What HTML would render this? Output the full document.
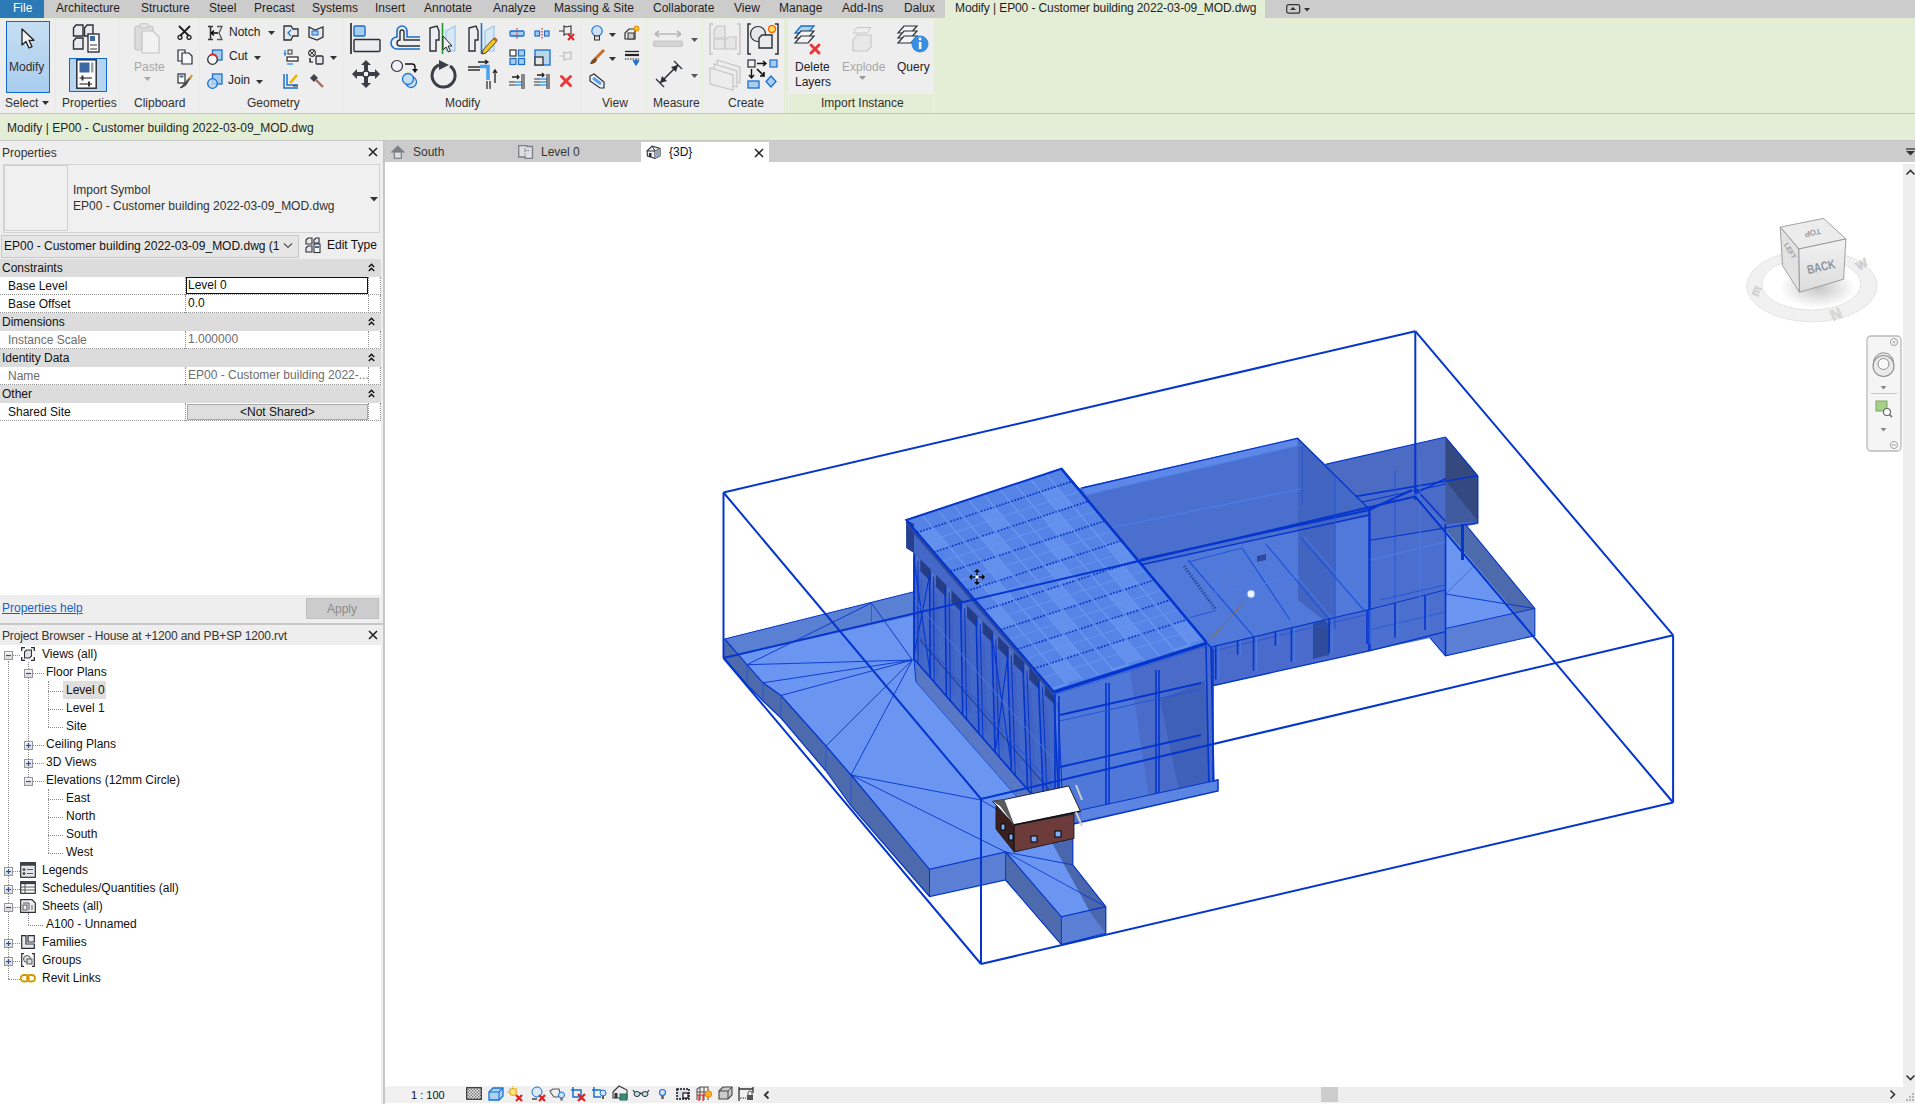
<!DOCTYPE html><html><head><meta charset="utf-8"><style>
html,body{margin:0;padding:0;width:1915px;height:1104px;overflow:hidden;background:#fff;font-family:"Liberation Sans",sans-serif;}
.t{position:absolute;white-space:nowrap;line-height:15px;}
svg{position:absolute;overflow:visible}
</style></head><body>
<div style="position:absolute;left:0px;top:0px;width:1915px;height:18px;background:#cccccc"></div>
<div style="position:absolute;left:0px;top:0px;width:44px;height:18px;background:#2b79b5"></div>
<div class="t" style="left:13px;top:1px;font-size:12px;color:#ffffff;">File</div>
<div class="t" style="left:56px;top:1px;font-size:12px;color:#1e1e1e;">Architecture</div>
<div class="t" style="left:141px;top:1px;font-size:12px;color:#1e1e1e;">Structure</div>
<div class="t" style="left:209px;top:1px;font-size:12px;color:#1e1e1e;">Steel</div>
<div class="t" style="left:254px;top:1px;font-size:12px;color:#1e1e1e;">Precast</div>
<div class="t" style="left:312px;top:1px;font-size:12px;color:#1e1e1e;">Systems</div>
<div class="t" style="left:375px;top:1px;font-size:12px;color:#1e1e1e;">Insert</div>
<div class="t" style="left:424px;top:1px;font-size:12px;color:#1e1e1e;">Annotate</div>
<div class="t" style="left:493px;top:1px;font-size:12px;color:#1e1e1e;">Analyze</div>
<div class="t" style="left:554px;top:1px;font-size:12px;color:#1e1e1e;">Massing &amp; Site</div>
<div class="t" style="left:653px;top:1px;font-size:12px;color:#1e1e1e;">Collaborate</div>
<div class="t" style="left:734px;top:1px;font-size:12px;color:#1e1e1e;">View</div>
<div class="t" style="left:779px;top:1px;font-size:12px;color:#1e1e1e;">Manage</div>
<div class="t" style="left:842px;top:1px;font-size:12px;color:#1e1e1e;">Add-Ins</div>
<div class="t" style="left:904px;top:1px;font-size:12px;color:#1e1e1e;">Dalux</div>
<div style="position:absolute;left:945px;top:0px;width:320px;height:18px;background:#e4eed6"></div>
<div class="t" style="left:955px;top:1px;font-size:12px;color:#1e1e1e;letter-spacing:-0.1px">Modify | EP00 - Customer building 2022-03-09_MOD.dwg</div>
<div style="position:absolute;left:0px;top:18px;width:1915px;height:95px;background:#e4eed6"></div>
<div style="position:absolute;left:0px;top:113px;width:1915px;height:1px;background:#c5c5c5"></div>
<div style="position:absolute;left:0px;top:19px;width:55px;height:94px;background:#eeeeee"></div>
<div style="position:absolute;left:56px;top:19px;width:63px;height:94px;background:#eeeeee"></div>
<div style="position:absolute;left:120px;top:19px;width:79px;height:94px;background:#eeeeee"></div>
<div style="position:absolute;left:200px;top:19px;width:143px;height:94px;background:#eeeeee"></div>
<div style="position:absolute;left:344px;top:19px;width:237px;height:94px;background:#eeeeee"></div>
<div style="position:absolute;left:582px;top:19px;width:64px;height:94px;background:#eeeeee"></div>
<div style="position:absolute;left:647px;top:19px;width:55px;height:94px;background:#eeeeee"></div>
<div style="position:absolute;left:703px;top:19px;width:81px;height:94px;background:#eeeeee"></div>
<div style="position:absolute;left:788px;top:19px;width:146px;height:94px;background:#eeeeee"></div>
<div style="position:absolute;left:789px;top:94px;width:144px;height:19px;background:#e4eed6"></div>
<div class="t" style="left:5px;top:96px;font-size:12px;color:#303030;">Select</div>
<div class="t" style="left:62px;top:96px;font-size:12px;color:#303030;">Properties</div>
<div class="t" style="left:134px;top:96px;font-size:12px;color:#303030;">Clipboard</div>
<div class="t" style="left:247px;top:96px;font-size:12px;color:#303030;">Geometry</div>
<div class="t" style="left:445px;top:96px;font-size:12px;color:#303030;">Modify</div>
<div class="t" style="left:602px;top:96px;font-size:12px;color:#303030;">View</div>
<div class="t" style="left:653px;top:96px;font-size:12px;color:#303030;">Measure</div>
<div class="t" style="left:728px;top:96px;font-size:12px;color:#303030;">Create</div>
<div class="t" style="left:821px;top:96px;font-size:12px;color:#303030;">Import Instance</div>
<div style="position:absolute;left:6px;top:21px;width:44px;height:72px;box-sizing:border-box;border:1.5px solid #0f66cc;background:linear-gradient(#c6def3,#a9cdee)"></div>
<svg style="left:20px;top:28px" width="16" height="22" viewBox="0 0 16 22"><path d="M2,1 L2,17 L6,13.5 L9,20 L12,18.6 L9,12.3 L14,12.3 Z" fill="#f4f4f4" stroke="#222" stroke-width="1.3" stroke-linejoin="round"/></svg>
<div class="t" style="left:9px;top:60px;font-size:12px;color:#303030">Modify</div>
<svg style="left:42px;top:101px" width="7" height="4" viewBox="0 0 7 4"><polygon points="0,0 7,0 3.5,4" fill="#303030"/></svg>
<svg style="left:72px;top:23px" width="32" height="31" viewBox="0 0 32 31"><g stroke="#2b2f36" stroke-width="1.4" fill="#e8eaee"><path d="M1.5,5 L4,2 L11,2 L11,13 L1.5,13 Z"/><path d="M12.5,5 L15,2 L21,2 L21,13 L12.5,13 Z"/><path d="M1.5,18 L4,15 L11,15 L11,26 L1.5,26 Z"/></g><rect x="16" y="11" width="11" height="18" fill="#fff" stroke="#2b2f36" stroke-width="1.4"/><rect x="18" y="13" width="5" height="5" fill="#3e6aa8"/><line x1="18" y1="22" x2="25" y2="22" stroke="#333"/><line x1="18" y1="26" x2="25" y2="26" stroke="#333"/></svg>
<div style="position:absolute;left:69px;top:58px;width:38px;height:34px;box-sizing:border-box;border:1.5px solid #0f66cc;background:#b7d5f0"></div>
<svg style="left:76px;top:59px" width="21" height="30" viewBox="0 0 21 30"><rect x="0.8" y="0.8" width="19.4" height="28.4" fill="#fff" stroke="#2b2f36" stroke-width="1.5"/><rect x="3.5" y="3.5" width="10" height="10" fill="#3d68a6"/><rect x="15" y="3.5" width="2.5" height="10" fill="#9aa3ad"/><line x1="3.5" y1="19" x2="16" y2="19" stroke="#333" stroke-width="1.2"/><rect x="5.5" y="16.5" width="2" height="5" fill="#333"/><line x1="3.5" y1="25" x2="16" y2="25" stroke="#333" stroke-width="1.2"/><rect x="12" y="22.5" width="2" height="5" fill="#333"/></svg>
<svg style="left:134px;top:23px" width="27" height="31" viewBox="0 0 27 31"><rect x="1" y="3" width="18" height="24" rx="2" fill="#dcdcdc" stroke="#c4c4c4" stroke-width="1.2"/><rect x="6" y="0.8" width="8" height="4" rx="1" fill="#e6e6e6" stroke="#c4c4c4"/><path d="M8,8 L19,8 L25,14 L25,30 L8,30 Z" fill="#f2f2f2" stroke="#c4c4c4" stroke-width="1.2"/></svg>
<div class="t" style="left:134px;top:60px;font-size:12px;color:#a8a8a8">Paste</div>
<svg style="left:144px;top:77px" width="7" height="4" viewBox="0 0 7 4"><polygon points="0,0 7,0 3.5,4" fill="#a8a8a8"/></svg>
<svg style="left:177px;top:25px" width="15" height="15" viewBox="0 0 15 15"><path d="M2,1 L12,11 M13,1 L3,11" stroke="#1f1f1f" stroke-width="1.8"/><circle cx="3" cy="12.3" r="2" fill="none" stroke="#1f1f1f" stroke-width="1.3"/><circle cx="12" cy="12.3" r="2" fill="none" stroke="#1f1f1f" stroke-width="1.3"/></svg>
<svg style="left:177px;top:49px" width="16" height="16" viewBox="0 0 16 16"><path d="M1,1 L8,1 L8,12 L1,12 Z" fill="#f5f5f5" stroke="#2b2f36" stroke-width="1.2"/><path d="M5,4 L12,4 L15,7 L15,15 L5,15 Z" fill="#f8f8f8" stroke="#2b2f36" stroke-width="1.2"/></svg>
<svg style="left:177px;top:73px" width="16" height="16" viewBox="0 0 16 16"><rect x="1" y="1" width="7" height="9" fill="#fff" stroke="#2b2f36" stroke-width="1.2"/><rect x="2.5" y="2.5" width="4" height="2" fill="#3d68a6"/><path d="M15,2 L6,12 L3,15 L6,14 L9,12 Z" fill="#555" stroke="#333" stroke-width="0.8"/><path d="M15,2 L13,6" stroke="#d49a3a" stroke-width="2"/></svg>
<svg style="left:207px;top:25px" width="16" height="16" viewBox="0 0 16 16"><path d="M1,1.5 L6,1.5 M3.5,1.5 L3.5,14.5 M1,14.5 L6,14.5" stroke="#333" stroke-width="1.6"/><path d="M10,1.5 L15,1.5 L12,8 L15,14.5 L10,14.5" fill="none" stroke="#555" stroke-width="1.3"/><path d="M4,8 L11,8 M4,8 L7,5.5 M4,8 L7,10.5" stroke="#000" stroke-width="1.3"/></svg>
<div class="t" style="left:229px;top:25px;font-size:12px;color:#222">Notch</div>
<svg style="left:268px;top:31px" width="7" height="4" viewBox="0 0 7 4"><polygon points="0,0 7,0 3.5,4" fill="#333"/></svg>
<svg style="left:207px;top:49px" width="16" height="16" viewBox="0 0 16 16"><rect x="5.5" y="1" width="9.5" height="10" fill="#a9cdee" stroke="#1a6fd0" stroke-width="1.3"/><circle cx="5.5" cy="10.5" r="4.8" fill="#fafafa" stroke="#2b2f36" stroke-width="1.3"/><path d="M3,6 A4.8,4.8 0 0 1 10,8" fill="none" stroke="#e02020" stroke-width="1.5"/></svg>
<div class="t" style="left:229px;top:49px;font-size:12px;color:#222">Cut</div>
<svg style="left:254px;top:56px" width="7" height="4" viewBox="0 0 7 4"><polygon points="0,0 7,0 3.5,4" fill="#333"/></svg>
<svg style="left:207px;top:73px" width="16" height="16" viewBox="0 0 16 16"><rect x="5.5" y="1" width="9.5" height="10" fill="#a9cdee" stroke="#1a6fd0" stroke-width="1.3"/><circle cx="5.5" cy="10.5" r="4.8" fill="#b9d6ee" fill-opacity="0.8" stroke="#1a6fd0" stroke-width="1.3"/></svg>
<div class="t" style="left:228px;top:73px;font-size:12px;color:#222">Join</div>
<svg style="left:256px;top:80px" width="7" height="4" viewBox="0 0 7 4"><polygon points="0,0 7,0 3.5,4" fill="#333"/></svg>
<svg style="left:283px;top:25px" width="16" height="16" viewBox="0 0 16 16"><path d="M1,1 L8,1 L10,4 L15,4 L15,11 L10,11 L8,15 L1,15 Z" fill="#e6e8ec" stroke="#2b2f36" stroke-width="1.3"/><path d="M8,5 L5,8 L8,11" fill="none" stroke="#1a6fd0" stroke-width="1.2"/></svg>
<svg style="left:308px;top:25px" width="16" height="16" viewBox="0 0 16 16"><path d="M1,2 L7,5 L15,2 L15,12 L9,15 L1,12 Z" fill="#e8eaee" stroke="#2b2f36" stroke-width="1.3"/><rect x="4" y="6" width="6" height="4" fill="#a9cdee" stroke="#1a6fd0"/></svg>
<svg style="left:283px;top:49px" width="16" height="16" viewBox="0 0 16 16"><path d="M2,1 L2,6 M1,4 L2,6 L3,4" stroke="#2a8ae8" stroke-width="1.3" fill="none"/><rect x="5" y="1" width="4" height="4" fill="none" stroke="#333"/><rect x="4" y="8" width="11" height="4" fill="#fff" stroke="#333" stroke-width="1.3"/><path d="M4,15 L10,15" stroke="#2a8ae8" stroke-width="1.3"/></svg>
<svg style="left:308px;top:49px" width="16" height="16" viewBox="0 0 16 16"><circle cx="4" cy="4" r="3.3" fill="none" stroke="#333" stroke-width="1.2"/><path d="M1.8,1.8 L6.2,6.2 M6.2,1.8 L1.8,6.2" stroke="#333"/><rect x="8" y="7" width="7" height="8" rx="1" fill="#e6e8ec" stroke="#2b2f36" stroke-width="1.3"/><path d="M2,9 L2,13 L5,13" stroke="#000" stroke-width="1.2" fill="none"/></svg>
<svg style="left:330px;top:56px" width="7" height="4" viewBox="0 0 7 4"><polygon points="0,0 7,0 3.5,4" fill="#333"/></svg>
<svg style="left:283px;top:73px" width="16" height="16" viewBox="0 0 16 16"><path d="M1,1 L1,15 L15,15 M4,1 L4,12 L15,12" stroke="#1a6fd0" stroke-width="1.5" fill="none"/><path d="M7,10 L14,2" stroke="#f0b400" stroke-width="2.5"/><path d="M10,13 L15,13" stroke="#333"/></svg>
<svg style="left:308px;top:73px" width="16" height="16" viewBox="0 0 16 16"><path d="M2,5 L6,1 L10,5 L6,9 Z" fill="#3f454e"/><path d="M8,7 L15,14" stroke="#a86a5a" stroke-width="2.4"/></svg>
<svg style="left:350px;top:23px" width="31" height="32" viewBox="0 0 31 32"><line x1="1" y1="0" x2="1" y2="31" stroke="#111" stroke-width="1.5"/><rect x="4" y="3" width="11" height="10" rx="1" fill="#a9cdee" stroke="#1a6fd0" stroke-width="1.4"/><rect x="4" y="16.5" width="26" height="12" rx="1" fill="#e9ebef" stroke="#2b2f36" stroke-width="1.4"/></svg>
<svg style="left:390px;top:26px" width="31" height="25" viewBox="0 0 31 25"><path d="M30,11 L17,11 L17,5 A5,5 0 0 0 7,5 L7,11 A4,4 0 0 0 7,23 L30,23" fill="none" stroke="#1a6fd0" stroke-width="1.6"/><path d="M30,14 L14,14 L14,6 A2,2 0 0 0 10,6 L10,14 A1,1 0 0 0 10,20 L30,20" fill="none" stroke="#2b2f36" stroke-width="1.4"/></svg>
<svg style="left:429px;top:23px" width="28" height="31" viewBox="0 0 28 31"><path d="M1,5 L8,3 L10,8 L10,17 L7,17 L7,28 L1,28 Z" fill="#eceef2" stroke="#2b2f36" stroke-width="1.4"/><line x1="13.5" y1="0" x2="13.5" y2="31" stroke="#1a9a2a" stroke-width="1.6"/><path d="M17,8 L26,3 L26,28 L17,28 Z" fill="#d8e8f6" stroke="#9cc4ea" stroke-width="1.2"/><path d="M14,13 L14,27 L17,24 L19.5,29 L21.5,28 L19,23 L23,23 Z" fill="#f4f4f4" stroke="#222" stroke-width="1"/></svg>
<svg style="left:468px;top:23px" width="30" height="32" viewBox="0 0 30 32"><path d="M1,5 L8,3 L10,8 L10,17 L7,17 L7,28 L1,28 Z" fill="#eceef2" stroke="#2b2f36" stroke-width="1.4"/><line x1="13.5" y1="0" x2="13.5" y2="31" stroke="#1a6fd0" stroke-width="1.6"/><path d="M17,8 L26,3 L26,28 L17,28 Z" fill="#d8e8f6" stroke="#9cc4ea" stroke-width="1.2"/><path d="M26,15 L15,27 L14,31 L18,30 L29,18 Z" fill="#f5c518" stroke="#333" stroke-width="0.9"/><path d="M26,15 L29,18" stroke="#b5652a" stroke-width="2.5"/></svg>
<svg style="left:351px;top:59px" width="30" height="30" viewBox="0 0 30 30"><path d="M15,1 L20,6 L17,6 L17,12 L13,12 L13,6 L10,6 Z M15,29 L20,24 L17,24 L17,18 L13,18 L13,24 L10,24 Z M1,15 L6,10 L6,13 L12,13 L12,17 L6,17 L6,20 Z M29,15 L24,10 L24,13 L18,13 L18,17 L24,17 L24,20 Z" fill="#3a3f47"/><rect x="12.5" y="12.5" width="5" height="5" fill="#fff" stroke="#3a3f47" stroke-width="1.2"/></svg>
<svg style="left:391px;top:60px" width="28" height="29" viewBox="0 0 28 29"><circle cx="6" cy="6" r="5.5" fill="#f0f1f4" stroke="#2b2f36" stroke-width="1.2"/><path d="M14,4 L21,4 A3,3 0 0 1 24,7 L24,10" fill="none" stroke="#111" stroke-width="1.4"/><path d="M21,9 L27,9 L24,13 Z" fill="#111"/><circle cx="20" cy="22" r="5.5" fill="#cfe3f3" stroke="#1a6fd0" stroke-width="1.3"/><circle cx="17" cy="19" r="5.5" fill="#c3ddf2" stroke="#1a6fd0" stroke-width="1.3"/></svg>
<svg style="left:431px;top:60px" width="27" height="29" viewBox="0 0 27 29"><path d="M19,6 A11.5,11.5 0 1 1 8,5" fill="none" stroke="#3a3f47" stroke-width="3"/><path d="M8,0 L18,5 L8,10 Z" fill="#3a3f47"/></svg>
<svg style="left:468px;top:60px" width="30" height="30" viewBox="0 0 30 30"><path d="M10,2 L20,2 M17,0 L20,2 L17,4" stroke="#222" stroke-width="1.3" fill="none"/><path d="M0,7 L12,7 M0,10 L12,10" stroke="#333" stroke-width="1.3"/><path d="M12,6.5 L20,6.5 L20,20" fill="none" stroke="#4aa0f0" stroke-width="3.5"/><path d="M19,21 L19,29 M22,21 L22,29" stroke="#333" stroke-width="1.3"/><path d="M27,10 L27,23 M25,13 L27,10 L29,13" stroke="#222" stroke-width="1.3" fill="none"/></svg>
<svg style="left:509px;top:28px" width="16" height="11" viewBox="0 0 16 11"><rect x="1" y="3" width="14" height="5" rx="1" fill="#a9cdee" stroke="#1a6fd0" stroke-width="1.3"/><line x1="8" y1="0" x2="8" y2="11" stroke="#e02020" stroke-width="1.2" stroke-dasharray="1.5 1.5"/></svg>
<svg style="left:534px;top:28px" width="16" height="11" viewBox="0 0 16 11"><rect x="1" y="3" width="4.5" height="5" fill="#a9cdee" stroke="#1a6fd0" stroke-width="1.2"/><rect x="10.5" y="3" width="4.5" height="5" fill="#a9cdee" stroke="#1a6fd0" stroke-width="1.2"/><line x1="8" y1="0" x2="8" y2="11" stroke="#e02020" stroke-width="1.2" stroke-dasharray="1.5 1.5"/></svg>
<svg style="left:559px;top:25px" width="16" height="16" viewBox="0 0 16 16"><path d="M0,6 L5,6 M5,1 L5,10 L7,9 L12,9 L12,1 L7,2 Z" fill="none" stroke="#333" stroke-width="1.1"/><path d="M9,9 L15,15 M15,9 L9,15" stroke="#e02020" stroke-width="2"/></svg>
<svg style="left:509px;top:49px" width="16" height="16" viewBox="0 0 16 16"><rect x="1" y="1" width="6" height="6" fill="#fff" stroke="#333" stroke-width="1.2"/><rect x="9.5" y="1" width="6" height="6" fill="#a9cdee" stroke="#1a6fd0" stroke-width="1.2"/><rect x="1" y="9.5" width="6" height="6" fill="#a9cdee" stroke="#1a6fd0" stroke-width="1.2"/><rect x="9.5" y="9.5" width="6" height="6" fill="#a9cdee" stroke="#1a6fd0" stroke-width="1.2"/></svg>
<svg style="left:534px;top:49px" width="16" height="16" viewBox="0 0 16 16"><rect x="1" y="1" width="15" height="15" fill="#b8d6ee" stroke="#1a6fd0" stroke-width="1.3"/><rect x="1" y="8" width="8" height="8" fill="#e8e8e8" stroke="#333" stroke-width="1.3"/></svg>
<svg style="left:559px;top:51px" width="16" height="10" viewBox="0 0 16 10"><path d="M0,5 L5,5 M5,1 L5,9 L7,8 L12,8 L12,1 L7,2 Z" fill="none" stroke="#bdbdbd" stroke-width="1.1"/></svg>
<svg style="left:509px;top:73px" width="16" height="16" viewBox="0 0 16 16"><path d="M3,4 L10,4 M8,2 L10,4 L8,6" stroke="#222" stroke-width="1.3" fill="none"/><path d="M0,9 L6,9 M0,12 L6,12" stroke="#333" stroke-width="1.2"/><path d="M6,9 L13,9 M6,12 L13,12" stroke="#4aa0f0" stroke-width="1.3"/><path d="M13,1 L13,16 M15,1 L15,16" stroke="#333" stroke-width="1.1"/></svg>
<svg style="left:534px;top:73px" width="16" height="16" viewBox="0 0 16 16"><path d="M3,2 L10,2 M8,0 L10,2 L8,4" stroke="#222" stroke-width="1.3" fill="none"/><path d="M0,6 L6,6 M0,9 L6,9 M0,12 L6,12" stroke="#333" stroke-width="1.2"/><path d="M6,6 L13,6 M6,9 L13,9 M6,12 L13,12" stroke="#4aa0f0" stroke-width="1.3"/><path d="M13,1 L13,16 M15,1 L15,16" stroke="#333" stroke-width="1.1"/></svg>
<svg style="left:560px;top:75px" width="12" height="12" viewBox="0 0 12 12"><path d="M1.5,1.5 L10.5,10.5 M10.5,1.5 L1.5,10.5" stroke="#e83a3a" stroke-width="3" stroke-linecap="round"/></svg>
<svg style="left:591px;top:25px" width="12" height="16" viewBox="0 0 12 16"><circle cx="6" cy="6" r="5.2" fill="#cfe0f8" stroke="#1a6fd0" stroke-width="1.1"/><rect x="3.5" y="11" width="5" height="4" fill="#ddd" stroke="#333" stroke-width="1"/></svg>
<svg style="left:609px;top:33px" width="7" height="4" viewBox="0 0 7 4"><polygon points="0,0 7,0 3.5,4" fill="#333"/></svg>
<svg style="left:624px;top:25px" width="16" height="16" viewBox="0 0 16 16"><path d="M1,8 L5,4 L11,4 L11,14 L1,14 Z" fill="#eee" stroke="#333" stroke-width="1.2"/><rect x="4" y="8" width="6" height="6" fill="#ccc" stroke="#333"/><circle cx="12.5" cy="3.5" r="2.5" fill="#ffcc00" stroke="#e06000" stroke-width="0.8"/></svg>
<svg style="left:589px;top:49px" width="16" height="16" viewBox="0 0 16 16"><path d="M15,1 L6,10" stroke="#c8702a" stroke-width="3"/><path d="M7,9 C4,9 2,12 1,15 C5,15 8,13 8,10 Z" fill="#7a4a22"/></svg>
<svg style="left:609px;top:57px" width="7" height="4" viewBox="0 0 7 4"><polygon points="0,0 7,0 3.5,4" fill="#333"/></svg>
<svg style="left:624px;top:50px" width="16" height="16" viewBox="0 0 16 16"><path d="M1,1.5 L15,1.5" stroke="#222" stroke-width="1.3"/><path d="M1,5 L15,5" stroke="#222" stroke-width="2.2"/><path d="M1,9 L15,9" stroke="#222" stroke-width="1" stroke-dasharray="1.5 1"/><path d="M12,9 L12,13 M9.5,11 L12,15 L14.5,11 Z" fill="#1a6fd0" stroke="#1a6fd0" stroke-width="1.3"/></svg>
<svg style="left:589px;top:73px" width="16" height="16" viewBox="0 0 16 16"><path d="M1,3 L5,1 L15,9 L15,15 L11,15 L1,8 Z" fill="#eef2f6" stroke="#2b2f36" stroke-width="1.2"/><path d="M4,5 L12,11" stroke="#5aa0f0" stroke-width="3"/></svg>
<svg style="left:653px;top:30px" width="31" height="17" viewBox="0 0 31 17"><path d="M2,4 L28,4 M2,4 L6,1 M2,4 L6,7 M28,4 L24,1 M28,4 L24,7" stroke="#b8b8b8" stroke-width="1.6" fill="none"/><rect x="0.5" y="11" width="29" height="5.5" rx="1" fill="#d4d4d4" stroke="#c4c4c4"/></svg>
<svg style="left:691px;top:38px" width="7" height="4" viewBox="0 0 7 4"><polygon points="0,0 7,0 3.5,4" fill="#555"/></svg>
<svg style="left:654px;top:59px" width="30" height="30" viewBox="0 0 30 30"><path d="M2,20 L10,28 M20,2 L28,10" stroke="#2b2f36" stroke-width="1.3"/><path d="M6,24 L24,6" stroke="#2b2f36" stroke-width="1.6"/><path d="M24,6 L17,8 L22,13 Z M6,24 L13,22 L8,17 Z" fill="#2b2f36"/></svg>
<svg style="left:691px;top:74px" width="7" height="4" viewBox="0 0 7 4"><polygon points="0,0 7,0 3.5,4" fill="#555"/></svg>
<svg style="left:709px;top:23px" width="32" height="32" viewBox="0 0 32 32"><path d="M4,1 L1,1 L1,31 L4,31 M28,1 L31,1 L31,31 L28,31" fill="none" stroke="#c4c4c4" stroke-width="1.4"/><g fill="#e6e6e6" stroke="#c6c6c6" stroke-width="1.2"><path d="M5,7 L8,3 L16,3 L16,15 L5,15 Z"/><path d="M5,16 L16,16 L16,26 L5,26 Z"/><path d="M16,18 L19,14 L27,14 L27,26 L16,26 Z"/></g></svg>
<svg style="left:747px;top:23px" width="32" height="32" viewBox="0 0 32 32"><path d="M4,1 L1,1 L1,31 L4,31 M28,1 L31,1 L31,31 L28,31" fill="none" stroke="#2b2f36" stroke-width="1.5"/><circle cx="11" cy="11" r="7.5" fill="#e6e8ec" stroke="#2b2f36" stroke-width="1.2"/><path d="M12,15 L15,12 L25,12 L25,25 L12,25 Z" fill="#e8eaee" stroke="#2b2f36" stroke-width="1.4"/><circle cx="25" cy="6" r="3.5" fill="#ffe066" stroke="#ff6600" stroke-width="1.4"/></svg>
<svg style="left:709px;top:59px" width="32" height="32" viewBox="0 0 32 32"><g fill="#ececec" stroke="#c6c6c6" stroke-width="1.2"><path d="M8,1 L31,8 L31,24 L8,17 Z"/><path d="M5,5 L28,12 L28,28 L5,21 Z"/><path d="M1,9 L24,16 L24,31 L1,25 Z"/></g></svg>
<svg style="left:747px;top:59px" width="32" height="31" viewBox="0 0 32 31"><rect x="1" y="1" width="7" height="7" fill="#eef0f4" stroke="#2b2f36" stroke-width="1.2"/><path d="M10,4.5 L18,4.5 M16,2 L19,4.5 L16,7" stroke="#111" stroke-width="1.4" fill="none"/><rect x="23" y="1" width="7" height="7" fill="#a9cdee" stroke="#1a6fd0" stroke-width="1.2"/><path d="M4.5,10 L4.5,18 M2,16 L4.5,19 L7,16" stroke="#111" stroke-width="1.4" fill="none"/><path d="M10,10 L17,17 M13,17 L17,17 L17,13" stroke="#111" stroke-width="1.6" fill="none"/><rect x="1" y="22" width="11" height="7" fill="#a9cdee" stroke="#1a6fd0" stroke-width="1.3"/><path d="M24,17 L29,22.5 L24,28 L19,22.5 Z" fill="#a9cdee" stroke="#1a6fd0" stroke-width="1.3"/></svg>
<svg style="left:795px;top:24px" width="28" height="30" viewBox="0 0 28 30"><path d="M6,2 L19,2 L13,9 L0,9 Z" fill="#a9d3f0" stroke="#1a6fd0" stroke-width="1.3"/><path d="M6,7 L19,7 L13,14 L0,14 Z" fill="#f4f4f4" stroke="#2b2f36" stroke-width="1.2"/><path d="M6,12 L19,12 L13,19 L0,19 Z" fill="#f4f4f4" stroke="#2b2f36" stroke-width="1.2"/><path d="M16,21 L24,29 M24,21 L16,29" stroke="#e83a3a" stroke-width="3" stroke-linecap="round"/></svg>
<div class="t" style="left:795px;top:60px;font-size:12px;color:#222">Delete</div>
<div class="t" style="left:795px;top:75px;font-size:12px;color:#222">Layers</div>
<svg style="left:852px;top:27px" width="21" height="25" viewBox="0 0 21 25"><path d="M5,0.6 L19,0.6 L15,6 L1,6 Z" fill="#efefef" stroke="#c6c6c6" stroke-width="1"/><path d="M1,13 L5,8 L19,8 L19,20 L15,24 L1,24 Z" fill="#e8e8e8" stroke="#c6c6c6" stroke-width="1.1"/></svg>
<div class="t" style="left:842px;top:60px;font-size:12px;color:#a8a8a8">Explode</div>
<svg style="left:859px;top:76px" width="7" height="4" viewBox="0 0 7 4"><polygon points="0,0 7,0 3.5,4" fill="#999"/></svg>
<svg style="left:898px;top:24px" width="31" height="31" viewBox="0 0 31 31"><path d="M6,2 L19,2 L13,9 L0,9 Z" fill="#f4f4f4" stroke="#2b2f36" stroke-width="1.2"/><path d="M6,7 L19,7 L13,14 L0,14 Z" fill="#f4f4f4" stroke="#2b2f36" stroke-width="1.2"/><path d="M6,12 L19,12 L13,19 L0,19 Z" fill="#f4f4f4" stroke="#2b2f36" stroke-width="1.2"/><circle cx="22" cy="20" r="8.5" fill="#3a8ee0"/><rect x="20.8" y="18" width="2.6" height="7" fill="#fff"/><circle cx="22" cy="15" r="1.4" fill="#fff"/></svg>
<div class="t" style="left:897px;top:60px;font-size:12px;color:#222">Query</div>
<svg style="left:1286px;top:4px" width="26" height="11" viewBox="0 0 26 11"><rect x="0.7" y="0.7" width="13" height="8.5" rx="2" fill="none" stroke="#333" stroke-width="1.2"/><path d="M4,6 L7,3 L10,6 Z" fill="#333"/><path d="M18,4 L24,4 L21,7.5 Z" fill="#333"/></svg>
<div style="position:absolute;left:0px;top:114px;width:1915px;height:26px;background:#e4eed6"></div>
<div class="t" style="left:7px;top:121px;font-size:12px;color:#1e1e1e;">Modify | EP00 - Customer building 2022-03-09_MOD.dwg</div>
<div style="position:absolute;left:0px;top:140px;width:1915px;height:1px;background:#c8c8c8"></div>
<div style="position:absolute;left:0px;top:141px;width:383px;height:963px;background:#eeeeee"></div>
<div style="position:absolute;left:383px;top:141px;width:2px;height:963px;background:#c6c6c6"></div>
<div class="t" style="left:2px;top:146px;font-size:12px;color:#333;">Properties</div>
<div style="position:absolute;left:3px;top:164px;width:377px;height:69px;background:#f0f0f0;border:1px solid #d4d4d4;box-sizing:border-box"></div>
<div style="position:absolute;left:4px;top:165px;width:64px;height:66px;background:#f0f0f0;border:1px solid #d0d0d0;box-sizing:border-box"></div>
<div class="t" style="left:73px;top:183px;font-size:12px;color:#303030;">Import Symbol</div>
<div class="t" style="left:73px;top:199px;font-size:12px;color:#303030;">EP00 - Customer building 2022-03-09_MOD.dwg</div>
<div style="position:absolute;left:1px;top:235px;width:298px;height:23px;background:#e6e6e6;border:1px solid #c8c8c8;box-sizing:border-box"></div>
<div class="t" style="left:4px;top:239px;font-size:12px;color:#111;">EP00 - Customer building 2022-03-09_MOD.dwg (1</div>
<div class="t" style="left:327px;top:238px;font-size:12px;color:#111;">Edit Type</div>
<div style="position:absolute;left:0px;top:259px;width:381px;height:162px;background:#ffffff"></div>
<div style="position:absolute;left:0px;top:259px;width:381px;height:18px;background:#dcdcdc"></div>
<div class="t" style="left:2px;top:261px;font-size:12px;color:#111;">Constraints</div>
<div class="t" style="left:8px;top:279px;font-size:12px;color:#111;">Base Level</div>
<div style="position:absolute;left:0px;top:294px;width:381px;height:1px;border-top:1px dotted #909090;box-sizing:border-box"></div>
<div style="position:absolute;left:185px;top:277px;width:1px;height:18px;border-left:1px dotted #909090;box-sizing:border-box"></div>
<div style="position:absolute;left:380px;top:277px;width:1px;height:18px;border-left:1px dotted #909090;box-sizing:border-box"></div>
<div style="position:absolute;left:368px;top:277px;width:1px;height:18px;border-left:1px dotted #909090;box-sizing:border-box"></div>
<div class="t" style="left:8px;top:297px;font-size:12px;color:#111;">Base Offset</div>
<div style="position:absolute;left:0px;top:312px;width:381px;height:1px;border-top:1px dotted #909090;box-sizing:border-box"></div>
<div style="position:absolute;left:185px;top:295px;width:1px;height:18px;border-left:1px dotted #909090;box-sizing:border-box"></div>
<div style="position:absolute;left:380px;top:295px;width:1px;height:18px;border-left:1px dotted #909090;box-sizing:border-box"></div>
<div style="position:absolute;left:368px;top:295px;width:1px;height:18px;border-left:1px dotted #909090;box-sizing:border-box"></div>
<div style="position:absolute;left:0px;top:313px;width:381px;height:18px;background:#dcdcdc"></div>
<div class="t" style="left:2px;top:315px;font-size:12px;color:#111;">Dimensions</div>
<div class="t" style="left:8px;top:333px;font-size:12px;color:#6d6d6d;">Instance Scale</div>
<div style="position:absolute;left:0px;top:348px;width:381px;height:1px;border-top:1px dotted #909090;box-sizing:border-box"></div>
<div style="position:absolute;left:185px;top:331px;width:1px;height:18px;border-left:1px dotted #909090;box-sizing:border-box"></div>
<div style="position:absolute;left:380px;top:331px;width:1px;height:18px;border-left:1px dotted #909090;box-sizing:border-box"></div>
<div style="position:absolute;left:368px;top:331px;width:1px;height:18px;border-left:1px dotted #909090;box-sizing:border-box"></div>
<div style="position:absolute;left:0px;top:349px;width:381px;height:18px;background:#dcdcdc"></div>
<div class="t" style="left:2px;top:351px;font-size:12px;color:#111;">Identity Data</div>
<div class="t" style="left:8px;top:369px;font-size:12px;color:#6d6d6d;">Name</div>
<div style="position:absolute;left:0px;top:384px;width:381px;height:1px;border-top:1px dotted #909090;box-sizing:border-box"></div>
<div style="position:absolute;left:185px;top:367px;width:1px;height:18px;border-left:1px dotted #909090;box-sizing:border-box"></div>
<div style="position:absolute;left:380px;top:367px;width:1px;height:18px;border-left:1px dotted #909090;box-sizing:border-box"></div>
<div style="position:absolute;left:368px;top:367px;width:1px;height:18px;border-left:1px dotted #909090;box-sizing:border-box"></div>
<div style="position:absolute;left:0px;top:385px;width:381px;height:18px;background:#dcdcdc"></div>
<div class="t" style="left:2px;top:387px;font-size:12px;color:#111;">Other</div>
<div class="t" style="left:8px;top:405px;font-size:12px;color:#111;">Shared Site</div>
<div style="position:absolute;left:0px;top:420px;width:381px;height:1px;border-top:1px dotted #909090;box-sizing:border-box"></div>
<div style="position:absolute;left:185px;top:403px;width:1px;height:18px;border-left:1px dotted #909090;box-sizing:border-box"></div>
<div style="position:absolute;left:380px;top:403px;width:1px;height:18px;border-left:1px dotted #909090;box-sizing:border-box"></div>
<div style="position:absolute;left:368px;top:403px;width:1px;height:18px;border-left:1px dotted #909090;box-sizing:border-box"></div>
<div style="position:absolute;left:0px;top:421px;width:381px;height:174px;background:#ffffff"></div>
<div style="position:absolute;left:186px;top:277px;width:182px;height:17px;border:1.5px solid #111;box-sizing:border-box;background:#fff"></div>
<div class="t" style="left:188px;top:278px;font-size:12px;color:#111;">Level 0</div>
<div class="t" style="left:188px;top:296px;font-size:12px;color:#111;">0.0</div>
<div class="t" style="left:188px;top:332px;font-size:12px;color:#6d6d6d;">1.000000</div>
<div class="t" style="left:188px;top:368px;font-size:12px;color:#6d6d6d;">EP00 - Customer building 2022-...</div>
<div style="position:absolute;left:187px;top:404px;width:181px;height:16px;background:#dedede;border:1px solid #a8a8a8;box-sizing:border-box"></div>
<div class="t" style="left:240px;top:405px;font-size:12px;color:#111;">&lt;Not Shared&gt;</div>
<div class="t" style="left:2px;top:601px;font-size:12px;color:#1a5fc8;text-decoration:underline">Properties help</div>
<div style="position:absolute;left:306px;top:598px;width:73px;height:21px;background:#cccccc;border:1px solid #c0c0c0;box-sizing:border-box"></div>
<div class="t" style="left:327px;top:602px;font-size:12px;color:#8c8c8c;">Apply</div>
<div style="position:absolute;left:0px;top:623px;width:383px;height:2px;background:#c8c8c8"></div>
<div class="t" style="left:2px;top:629px;font-size:12px;color:#333;letter-spacing:-0.15px">Project Browser - House at +1200 and PB+SP 1200.rvt</div>
<div style="position:absolute;left:0px;top:645px;width:381px;height:459px;background:#ffffff"></div>
<div style="position:absolute;left:63px;top:681px;width:43px;height:18px;background:#dedede"></div>
<div class="t" style="left:42px;top:647px;font-size:12px;color:#111;">Views (all)</div>
<div class="t" style="left:46px;top:665px;font-size:12px;color:#111;">Floor Plans</div>
<div class="t" style="left:66px;top:683px;font-size:12px;color:#111;">Level 0</div>
<div class="t" style="left:66px;top:701px;font-size:12px;color:#111;">Level 1</div>
<div class="t" style="left:66px;top:719px;font-size:12px;color:#111;">Site</div>
<div class="t" style="left:46px;top:737px;font-size:12px;color:#111;">Ceiling Plans</div>
<div class="t" style="left:46px;top:755px;font-size:12px;color:#111;">3D Views</div>
<div class="t" style="left:46px;top:773px;font-size:12px;color:#111;">Elevations (12mm Circle)</div>
<div class="t" style="left:66px;top:791px;font-size:12px;color:#111;">East</div>
<div class="t" style="left:66px;top:809px;font-size:12px;color:#111;">North</div>
<div class="t" style="left:66px;top:827px;font-size:12px;color:#111;">South</div>
<div class="t" style="left:66px;top:845px;font-size:12px;color:#111;">West</div>
<div class="t" style="left:42px;top:863px;font-size:12px;color:#111;">Legends</div>
<div class="t" style="left:42px;top:881px;font-size:12px;color:#111;">Schedules/Quantities (all)</div>
<div class="t" style="left:42px;top:899px;font-size:12px;color:#111;">Sheets (all)</div>
<div class="t" style="left:46px;top:917px;font-size:12px;color:#111;">A100 - Unnamed</div>
<div class="t" style="left:42px;top:935px;font-size:12px;color:#111;">Families</div>
<div class="t" style="left:42px;top:953px;font-size:12px;color:#111;">Groups</div>
<div class="t" style="left:42px;top:971px;font-size:12px;color:#111;">Revit Links</div>
<div style="position:absolute;left:385px;top:141px;width:1530px;height:21px;background:#cccccc"></div>
<div style="position:absolute;left:641px;top:142px;width:128px;height:20px;background:#ffffff"></div>
<div class="t" style="left:413px;top:145px;font-size:12px;color:#333;">South</div>
<div class="t" style="left:541px;top:145px;font-size:12px;color:#333;">Level 0</div>
<div class="t" style="left:669px;top:145px;font-size:12px;color:#111;">{3D}</div>
<div style="position:absolute;left:385px;top:162px;width:1519px;height:925px;background:#ffffff"></div>
<div style="position:absolute;left:1903px;top:164px;width:12px;height:923px;background:#eeeeee"></div>
<div style="position:absolute;left:385px;top:1087px;width:1530px;height:16px;background:#eeeeee"></div>
<div style="position:absolute;left:387px;top:1086px;width:371px;height:17px;background:#f0f0f0"></div>
<div class="t" style="left:411px;top:1088px;font-size:11px;color:#111;">1 : 100</div>
<svg width="0" height="0" style="position:absolute"><defs><linearGradient id="expg" x1="0" y1="0" x2="0" y2="1"><stop offset="0" stop-color="#fafafa"/><stop offset="1" stop-color="#d8d8d8"/></linearGradient></defs></svg>
<svg style="left:368px;top:147px" width="10" height="10" viewBox="0 0 10 10"><path d="M1,1 L9,9 M9,1 L1,9" stroke="#222" stroke-width="1.6"/></svg>
<svg style="left:370px;top:197px" width="8" height="5" viewBox="0 0 8 5"><polygon points="0,0 8,0 4,4.5" fill="#333"/></svg>
<svg style="left:283px;top:243px" width="10" height="6" viewBox="0 0 10 6"><path d="M1,0.5 L5,4.5 L9,0.5" fill="none" stroke="#555" stroke-width="1.2"/></svg>
<svg style="left:305px;top:237px" width="16" height="16" viewBox="0 0 16 16"><g fill="#e6e8ec" stroke="#2b2f36" stroke-width="1.1"><path d="M1,3 L3,1 L7,1 L7,7 L1,7 Z"/><path d="M9,3 L11,1 L14,1 L14,6 L9,6 Z"/><path d="M1,11 L3,9 L7,9 L7,15 L1,15 Z"/></g><rect x="9" y="7" width="6" height="8.5" fill="#fff" stroke="#2b2f36" stroke-width="1.1"/><rect x="10" y="9" width="4" height="2" fill="#3d68a6"/></svg>
<svg style="left:368px;top:263px" width="7" height="9" viewBox="0 0 7 9"><path d="M0.8,4 L3.5,1.2 L6.2,4 M0.8,8 L3.5,5.2 L6.2,8" fill="none" stroke="#111" stroke-width="1.4"/></svg>
<svg style="left:368px;top:317px" width="7" height="9" viewBox="0 0 7 9"><path d="M0.8,4 L3.5,1.2 L6.2,4 M0.8,8 L3.5,5.2 L6.2,8" fill="none" stroke="#111" stroke-width="1.4"/></svg>
<svg style="left:368px;top:353px" width="7" height="9" viewBox="0 0 7 9"><path d="M0.8,4 L3.5,1.2 L6.2,4 M0.8,8 L3.5,5.2 L6.2,8" fill="none" stroke="#111" stroke-width="1.4"/></svg>
<svg style="left:368px;top:389px" width="7" height="9" viewBox="0 0 7 9"><path d="M0.8,4 L3.5,1.2 L6.2,4 M0.8,8 L3.5,5.2 L6.2,8" fill="none" stroke="#111" stroke-width="1.4"/></svg>
<svg style="left:368px;top:630px" width="10" height="10" viewBox="0 0 10 10"><path d="M1,1 L9,9 M9,1 L1,9" stroke="#222" stroke-width="1.6"/></svg>
<svg style="left:4px;top:651px" width="9" height="9" viewBox="0 0 9 9"><rect x="0.5" y="0.5" width="8" height="8" fill="url(#expg)" stroke="#969696"/><path d="M2,4.5 L7,4.5" stroke="#3050a0" stroke-width="1.2"/></svg>
<div style="position:absolute;left:13px;top:655px;width:7px;height:1px;border-top:1px dotted #8a8a8a;box-sizing:border-box"></div>
<svg style="left:21px;top:647px" width="14" height="14" viewBox="0 0 14 14"><path d="M0.7,4 L0.7,0.7 L4,0.7 M10,0.7 L13.3,0.7 L13.3,4 M13.3,10 L13.3,13.3 L10,13.3 M4,13.3 L0.7,13.3 L0.7,10" fill="none" stroke="#2b2f36" stroke-width="1.3"/><path d="M3.5,5 L5.5,3 L10.5,3 L10.5,9 L8.5,11 L3.5,11 Z" fill="#dfe2e8" stroke="#2b2f36" stroke-width="1.1"/></svg>
<div style="position:absolute;left:8px;top:661px;width:1px;height:318px;border-left:1px dotted #8a8a8a;box-sizing:border-box"></div>
<div style="position:absolute;left:28px;top:662px;width:1px;height:7px;border-left:1px dotted #8a8a8a;box-sizing:border-box"></div>
<div style="position:absolute;left:28px;top:678px;width:1px;height:103px;border-left:1px dotted #8a8a8a;box-sizing:border-box"></div>
<svg style="left:24px;top:669px" width="9" height="9" viewBox="0 0 9 9"><rect x="0.5" y="0.5" width="8" height="8" fill="url(#expg)" stroke="#969696"/><path d="M2,4.5 L7,4.5" stroke="#3050a0" stroke-width="1.2"/></svg>
<div style="position:absolute;left:33px;top:673px;width:11px;height:1px;border-top:1px dotted #8a8a8a;box-sizing:border-box"></div>
<div style="position:absolute;left:48px;top:681px;width:1px;height:46px;border-left:1px dotted #8a8a8a;box-sizing:border-box"></div>
<div style="position:absolute;left:48px;top:691px;width:15px;height:1px;border-top:1px dotted #8a8a8a;box-sizing:border-box"></div>
<div style="position:absolute;left:48px;top:709px;width:15px;height:1px;border-top:1px dotted #8a8a8a;box-sizing:border-box"></div>
<div style="position:absolute;left:48px;top:727px;width:15px;height:1px;border-top:1px dotted #8a8a8a;box-sizing:border-box"></div>
<svg style="left:24px;top:741px" width="9" height="9" viewBox="0 0 9 9"><rect x="0.5" y="0.5" width="8" height="8" fill="url(#expg)" stroke="#969696"/><path d="M2,4.5 L7,4.5" stroke="#3050a0" stroke-width="1.2"/><path d="M4.5,2 L4.5,7" stroke="#3050a0" stroke-width="1.2"/></svg>
<div style="position:absolute;left:33px;top:745px;width:11px;height:1px;border-top:1px dotted #8a8a8a;box-sizing:border-box"></div>
<svg style="left:24px;top:759px" width="9" height="9" viewBox="0 0 9 9"><rect x="0.5" y="0.5" width="8" height="8" fill="url(#expg)" stroke="#969696"/><path d="M2,4.5 L7,4.5" stroke="#3050a0" stroke-width="1.2"/><path d="M4.5,2 L4.5,7" stroke="#3050a0" stroke-width="1.2"/></svg>
<div style="position:absolute;left:33px;top:763px;width:11px;height:1px;border-top:1px dotted #8a8a8a;box-sizing:border-box"></div>
<svg style="left:24px;top:777px" width="9" height="9" viewBox="0 0 9 9"><rect x="0.5" y="0.5" width="8" height="8" fill="url(#expg)" stroke="#969696"/><path d="M2,4.5 L7,4.5" stroke="#3050a0" stroke-width="1.2"/></svg>
<div style="position:absolute;left:33px;top:781px;width:11px;height:1px;border-top:1px dotted #8a8a8a;box-sizing:border-box"></div>
<div style="position:absolute;left:48px;top:789px;width:1px;height:64px;border-left:1px dotted #8a8a8a;box-sizing:border-box"></div>
<div style="position:absolute;left:48px;top:799px;width:15px;height:1px;border-top:1px dotted #8a8a8a;box-sizing:border-box"></div>
<div style="position:absolute;left:48px;top:817px;width:15px;height:1px;border-top:1px dotted #8a8a8a;box-sizing:border-box"></div>
<div style="position:absolute;left:48px;top:835px;width:15px;height:1px;border-top:1px dotted #8a8a8a;box-sizing:border-box"></div>
<div style="position:absolute;left:48px;top:853px;width:15px;height:1px;border-top:1px dotted #8a8a8a;box-sizing:border-box"></div>
<svg style="left:4px;top:867px" width="9" height="9" viewBox="0 0 9 9"><rect x="0.5" y="0.5" width="8" height="8" fill="url(#expg)" stroke="#969696"/><path d="M2,4.5 L7,4.5" stroke="#3050a0" stroke-width="1.2"/><path d="M4.5,2 L4.5,7" stroke="#3050a0" stroke-width="1.2"/></svg>
<div style="position:absolute;left:13px;top:871px;width:7px;height:1px;border-top:1px dotted #8a8a8a;box-sizing:border-box"></div>
<svg style="left:4px;top:885px" width="9" height="9" viewBox="0 0 9 9"><rect x="0.5" y="0.5" width="8" height="8" fill="url(#expg)" stroke="#969696"/><path d="M2,4.5 L7,4.5" stroke="#3050a0" stroke-width="1.2"/><path d="M4.5,2 L4.5,7" stroke="#3050a0" stroke-width="1.2"/></svg>
<div style="position:absolute;left:13px;top:889px;width:7px;height:1px;border-top:1px dotted #8a8a8a;box-sizing:border-box"></div>
<svg style="left:4px;top:903px" width="9" height="9" viewBox="0 0 9 9"><rect x="0.5" y="0.5" width="8" height="8" fill="url(#expg)" stroke="#969696"/><path d="M2,4.5 L7,4.5" stroke="#3050a0" stroke-width="1.2"/></svg>
<div style="position:absolute;left:13px;top:907px;width:7px;height:1px;border-top:1px dotted #8a8a8a;box-sizing:border-box"></div>
<svg style="left:4px;top:939px" width="9" height="9" viewBox="0 0 9 9"><rect x="0.5" y="0.5" width="8" height="8" fill="url(#expg)" stroke="#969696"/><path d="M2,4.5 L7,4.5" stroke="#3050a0" stroke-width="1.2"/><path d="M4.5,2 L4.5,7" stroke="#3050a0" stroke-width="1.2"/></svg>
<div style="position:absolute;left:13px;top:943px;width:7px;height:1px;border-top:1px dotted #8a8a8a;box-sizing:border-box"></div>
<svg style="left:4px;top:957px" width="9" height="9" viewBox="0 0 9 9"><rect x="0.5" y="0.5" width="8" height="8" fill="url(#expg)" stroke="#969696"/><path d="M2,4.5 L7,4.5" stroke="#3050a0" stroke-width="1.2"/><path d="M4.5,2 L4.5,7" stroke="#3050a0" stroke-width="1.2"/></svg>
<div style="position:absolute;left:13px;top:961px;width:7px;height:1px;border-top:1px dotted #8a8a8a;box-sizing:border-box"></div>
<div style="position:absolute;left:8px;top:979px;width:12px;height:1px;border-top:1px dotted #8a8a8a;box-sizing:border-box"></div>
<div style="position:absolute;left:28px;top:913px;width:1px;height:12px;border-left:1px dotted #8a8a8a;box-sizing:border-box"></div>
<div style="position:absolute;left:28px;top:925px;width:15px;height:1px;border-top:1px dotted #8a8a8a;box-sizing:border-box"></div>
<svg style="left:20px;top:862px" width="16" height="16" viewBox="0 0 16 16"><rect x="0.7" y="0.7" width="14.6" height="14.6" fill="#e4e6ea" stroke="#2b2f36" stroke-width="1.2"/><rect x="0.7" y="0.7" width="14.6" height="3" fill="#3a3f47"/><circle cx="4" cy="7.5" r="1.5" fill="#555"/><circle cx="4" cy="11.5" r="1.5" fill="#555"/><path d="M7,7.5 L13,7.5 M7,11.5 L13,11.5" stroke="#555" stroke-width="1.2"/></svg>
<svg style="left:20px;top:881px" width="16" height="13" viewBox="0 0 16 13"><rect x="0.7" y="0.7" width="14.6" height="11.6" fill="#fff" stroke="#2b2f36" stroke-width="1.2"/><rect x="0.7" y="0.7" width="14.6" height="2.5" fill="#3a3f47"/><path d="M0.7,6 L15,6 M0.7,9 L15,9 M5,3 L5,12" stroke="#555" stroke-width="1"/></svg>
<svg style="left:20px;top:899px" width="16" height="14" viewBox="0 0 16 14"><path d="M0.7,0.7 L12,0.7 L15.3,4 L15.3,13.3 L0.7,13.3 Z" fill="#f0f0f0" stroke="#2b2f36" stroke-width="1.2"/><rect x="3" y="6" width="4" height="5" fill="none" stroke="#555"/><path d="M3,4 L9,4 L9,11 M12,6 L12,11" stroke="#555" stroke-width="1" fill="none"/></svg>
<svg style="left:21px;top:935px" width="14" height="14" viewBox="0 0 14 14"><path d="M0.7,0.7 L5,0.7 L5,9 L13.3,9 L13.3,13.3 L0.7,13.3 Z" fill="#e8eaee" stroke="#2b2f36" stroke-width="1.2"/><path d="M7,0.7 L13.3,0.7 L13.3,7 L7,7 Z" fill="#e8eaee" stroke="#2b2f36" stroke-width="1.2"/></svg>
<svg style="left:21px;top:953px" width="14" height="14" viewBox="0 0 14 14"><path d="M3,0.7 L0.7,0.7 L0.7,13.3 L3,13.3 M11,0.7 L13.3,0.7 L13.3,13.3 L11,13.3" fill="none" stroke="#2b2f36" stroke-width="1.2"/><circle cx="6" cy="6" r="3.5" fill="#dde0e6" stroke="#555"/><rect x="6" y="6" width="5" height="5" fill="#dde0e6" stroke="#555"/></svg>
<svg style="left:20px;top:974px" width="16" height="9" viewBox="0 0 16 9"><rect x="0.8" y="1" width="8" height="6.5" rx="3.2" fill="none" stroke="#d49a00" stroke-width="1.8"/><rect x="7" y="1" width="8" height="6.5" rx="3.2" fill="none" stroke="#d49a00" stroke-width="1.8"/></svg>
<svg style="left:390px;top:145px" width="16" height="14" viewBox="0 0 16 14"><path d="M7.7,0.5 L15.3,7.5 L0.5,7.5 Z" fill="#7b7f86"/><rect x="4.3" y="7" width="7" height="6.3" fill="#dcdee2" stroke="#7b7f86" stroke-width="1.2"/></svg>
<svg style="left:518px;top:145px" width="16" height="14" viewBox="0 0 16 14"><path d="M0.7,0.7 L9,0.7 L9,1.5 L14.5,1.5 L14.5,13.3 L7,13.3 L7,12 L0.7,12 Z" fill="#dcdee2" stroke="#7b7f86" stroke-width="1.3"/><path d="M7,3 L7,12 M7,5.5 L12,5.5" stroke="#7b7f86" stroke-width="1" stroke-dasharray="1.5 1"/></svg>
<svg style="left:646px;top:145px" width="15" height="14" viewBox="0 0 15 14"><path d="M1,6 L6,1 L14,3.5 L14,11 L9,13.5 L1.5,11 Z" fill="#eef0f4" stroke="#2b2f36" stroke-width="1.1"/><path d="M6,1 L9,6 L14,3.5 M9,6 L9,13.5 M1,6 L9,6" fill="none" stroke="#2b2f36" stroke-width="1"/><path d="M9,6 L14,3.5 L14,11 L9,13.5 Z" fill="#9aa6b8"/><rect x="3" y="8" width="2.5" height="4" fill="#2b2f36"/></svg>
<svg style="left:754px;top:148px" width="10" height="10" viewBox="0 0 10 10"><path d="M1,1 L9,9 M9,1 L1,9" stroke="#222" stroke-width="1.5"/></svg>
<svg style="left:1906px;top:148px" width="9" height="8" viewBox="0 0 9 8"><path d="M0,1 L9,1" stroke="#333" stroke-width="1.3"/><polygon points="0,3 9,3 4.5,7.5" fill="#333"/></svg>
<svg style="left:1740px;top:205px" width="150" height="125" viewBox="1740 205 150 125"><defs><radialGradient id="shd" cx="0.5" cy="0.5" r="0.5"><stop offset="0" stop-color="#000" stop-opacity="0.22"/><stop offset="1" stop-color="#000" stop-opacity="0"/></radialGradient><linearGradient id="cubef" x1="0" y1="0" x2="0" y2="1"><stop offset="0" stop-color="#f2f2f2"/><stop offset="1" stop-color="#dcdcdc"/></linearGradient></defs><path fill-rule="evenodd" d="M1746.9,286 a65,35.7 0 1 0 130,0 a65,35.7 0 1 0 -130,0 Z M1762,284 a49.3,26 0 1 0 98.6,0 a49.3,26 0 1 0 -98.6,0 Z" fill="#f1f1f1" stroke="#cfcfcf" stroke-width="0.8" stroke-dasharray="2 1"/><ellipse cx="1818" cy="288" rx="38" ry="20" fill="url(#shd)"/><polygon points="1780.2,227.1 1823.6,218.4 1845.9,239 1798.9,249" fill="#ececec" stroke="#8c8c8c" stroke-width="0.8"/><polygon points="1780.2,227.1 1798.9,249 1799.5,292.2 1782.5,265.6" fill="#e2e2e2" stroke="#8c8c8c" stroke-width="0.8"/><polygon points="1798.9,249 1845.9,239 1843.6,279.2 1799.5,292.2" fill="url(#cubef)" stroke="#8c8c8c" stroke-width="0.8"/><text x="0" y="0" transform="translate(1822,271) rotate(-13) scale(0.82,1.05)" text-anchor="middle" font-family="Liberation Sans" font-weight="bold" font-size="12" fill="#8e949c">BACK</text><text x="0" y="0" transform="translate(1812,230) rotate(167)" text-anchor="middle" font-family="Liberation Sans" font-weight="bold" font-size="8" fill="#9a9ea4">TOP</text><text x="0" y="0" transform="translate(1788,252) rotate(60)" text-anchor="middle" font-family="Liberation Sans" font-weight="bold" font-size="7" fill="#9a9ea4">LEFT</text><text x="0" y="0" transform="translate(1838,319) rotate(-22)" text-anchor="middle" font-family="Liberation Sans" font-weight="bold" font-size="15" fill="#e2e2e2" stroke="#bdbdbd" stroke-width="0.5">N</text><text x="0" y="0" transform="translate(1864,268) rotate(-30)" text-anchor="middle" font-family="Liberation Sans" font-weight="bold" font-size="12" fill="#e2e2e2" stroke="#bdbdbd" stroke-width="0.5">W</text><text x="0" y="0" transform="translate(1755,295) rotate(25)" text-anchor="middle" font-family="Liberation Sans" font-weight="bold" font-size="12" fill="#e2e2e2" stroke="#bdbdbd" stroke-width="0.5">E</text></svg>
<svg style="left:1866px;top:335px" width="37" height="118" viewBox="0 0 37 118"><rect x="1" y="1" width="34" height="115" rx="4" fill="#f5f5f5" stroke="#b9b9b9" stroke-width="1.3"/><circle cx="28" cy="7" r="3.5" fill="#fff" stroke="#9a9a9a"/><path d="M26.5,5.5 L29.5,8.5 M29.5,5.5 L26.5,8.5" stroke="#9a9a9a" stroke-width="0.8"/><path d="M8,31 a10,10 0 1 1 19,0 a6,4 0 0 1 -19,0 Z" fill="#ececec" stroke="#8a8a8a" stroke-width="1"/><circle cx="17.5" cy="31" r="10.5" fill="#eaeaea" stroke="#8e8e8e" stroke-width="1.1"/><circle cx="17.5" cy="29" r="5.5" fill="#f8f8f8" stroke="#8e8e8e" stroke-width="1"/><polygon points="14.5,51 20.5,51 17.5,54.5" fill="#8a8a8a"/><line x1="5" y1="58.5" x2="31" y2="58.5" stroke="#c8c8c8"/><rect x="10" y="66" width="11" height="10" fill="#a8d08c" stroke="#7aa860"/><circle cx="21" cy="77" r="3.5" fill="#fff" stroke="#666" stroke-width="1.1"/><path d="M23.5,79.5 L26,82" stroke="#666" stroke-width="1.5"/><polygon points="14.5,93 20.5,93 17.5,96.5" fill="#8a8a8a"/><circle cx="28" cy="110" r="3.5" fill="#fff" stroke="#9a9a9a"/><path d="M26,110 L30,110" stroke="#9a9a9a"/></svg>
<svg style="left:1905px;top:168px" width="11" height="8" viewBox="0 0 11 8"><path d="M1.5,6.5 L5.5,2.5 L9.5,6.5" fill="none" stroke="#333" stroke-width="1.6"/></svg>
<svg style="left:1905px;top:1074px" width="11" height="8" viewBox="0 0 11 8"><path d="M1.5,1.5 L5.5,5.5 L9.5,1.5" fill="none" stroke="#333" stroke-width="1.6"/></svg>
<svg style="left:1889px;top:1089px" width="8" height="11" viewBox="0 0 8 11"><path d="M1.5,1.5 L5.5,5.5 L1.5,9.5" fill="none" stroke="#333" stroke-width="1.6"/></svg>
<div style="position:absolute;left:1321px;top:1087px;width:17px;height:15px;background:#cdcdcd"></div>
<svg style="left:1906px;top:1093px" width="9" height="9" viewBox="0 0 9 9"><g fill="#b8b8b8"><rect x="6" y="0" width="2" height="2"/><rect x="3" y="3" width="2" height="2"/><rect x="6" y="3" width="2" height="2"/><rect x="0" y="6" width="2" height="2"/><rect x="3" y="6" width="2" height="2"/><rect x="6" y="6" width="2" height="2"/></g></svg>
<svg style="left:466px;top:1087px" width="16" height="13" viewBox="0 0 16 13"><defs><pattern id="chk" width="3" height="3" patternUnits="userSpaceOnUse"><rect width="1.5" height="1.5" fill="#777"/><rect x="1.5" y="1.5" width="1.5" height="1.5" fill="#777"/></pattern></defs><rect x="0.7" y="0.7" width="14.6" height="11.6" fill="url(#chk)" stroke="#333" stroke-width="1.2"/></svg>
<svg style="left:488px;top:1087px" width="16" height="14" viewBox="0 0 16 14"><path d="M1,5 L5,1 L15,1 L15,9 L11,13 L1,13 Z" fill="#a9d3f0" stroke="#1a6fd0" stroke-width="1.3"/><path d="M1,5 L11,5 L15,1 M11,5 L11,13" fill="none" stroke="#1a6fd0" stroke-width="1.1"/></svg>
<svg style="left:507px;top:1086px" width="16" height="15" viewBox="0 0 16 15"><circle cx="6" cy="6" r="3.5" fill="#ffe27a" stroke="#e0a000"/><path d="M6,0 L6,1.5 M0,6 L1.5,6 M1.8,1.8 L2.8,2.8 M10.2,1.8 L9.2,2.8" stroke="#e0a000"/><path d="M9,9 L15,15 M15,9 L9,15" stroke="#e02020" stroke-width="2.2"/></svg>
<svg style="left:531px;top:1086px" width="15" height="15" viewBox="0 0 15 15"><circle cx="6" cy="6" r="5" fill="#dbeaf8" stroke="#1a6fd0"/><path d="M1,13 L6,13" stroke="#444" stroke-width="1.5"/><path d="M8,9 L14,15 M14,9 L8,15" stroke="#e02020" stroke-width="2.2"/></svg>
<svg style="left:549px;top:1087px" width="16" height="14" viewBox="0 0 16 14"><path d="M1,4 L4,2 L10,2 L11,6 L9,10 L5,10 L2,6 Z" fill="#eee" stroke="#555" stroke-width="1.1"/><circle cx="12.5" cy="8" r="3" fill="#cfe3ff" stroke="#1a6fd0"/><rect x="11.5" y="11" width="2" height="2.5" fill="#555"/></svg>
<svg style="left:570px;top:1086px" width="16" height="15" viewBox="0 0 16 15"><path d="M3,1 L3,11 L13,11 M1,4 L11,4 L11,14" fill="none" stroke="#1a6fd0" stroke-width="1.5"/><path d="M8,8 L15,15 M15,8 L8,15" stroke="#e02020" stroke-width="2.2"/></svg>
<svg style="left:591px;top:1086px" width="16" height="15" viewBox="0 0 16 15"><path d="M3,1 L3,11 L10,11 M1,4 L10,4" fill="none" stroke="#1a6fd0" stroke-width="1.5"/><circle cx="12" cy="7" r="3" fill="#cfe3ff" stroke="#1a6fd0"/><rect x="11" y="10" width="2" height="3" fill="#555"/></svg>
<svg style="left:612px;top:1085px" width="16" height="16" viewBox="0 0 16 16"><path d="M1,7 L7,1 L15,5 L15,13 L1,13 Z" fill="#eee" stroke="#333" stroke-width="1.1"/><rect x="2.5" y="8" width="3" height="5" fill="#333"/><rect x="8" y="9" width="7" height="6" fill="#3a8a7a" stroke="#2a6a5a"/></svg>
<svg style="left:633px;top:1088px" width="16" height="10" viewBox="0 0 16 10"><path d="M0,2 L4,8 L8,5 L12,8 L16,2" fill="none" stroke="#333" stroke-width="1.2"/><ellipse cx="4" cy="6" rx="3" ry="2.5" fill="#bfe0f0" stroke="#333"/><ellipse cx="12" cy="6" rx="3" ry="2.5" fill="#bfe0f0" stroke="#333"/></svg>
<svg style="left:659px;top:1089px" width="7" height="11" viewBox="0 0 7 11"><circle cx="3.5" cy="3.5" r="3" fill="#cfe3ff" stroke="#1a6fd0" stroke-width="1.1"/><rect x="2.3" y="7" width="2.4" height="3" fill="#555"/></svg>
<svg style="left:676px;top:1087px" width="14" height="13" viewBox="0 0 14 13"><rect x="1" y="2" width="12" height="10" fill="#dde2ea" stroke="#111" stroke-width="1.5" stroke-dasharray="2 1"/><rect x="7" y="6" width="5" height="5" fill="#fff" stroke="#111" stroke-width="1.2"/></svg>
<svg style="left:696px;top:1086px" width="16" height="15" viewBox="0 0 16 15"><path d="M1,14 L1,3 L4,1 L12,1 L12,14 M4,1 L4,14 M8,1 L8,14 M1,6 L12,6" fill="none" stroke="#555" stroke-width="1.1"/><path d="M1,9 L9,9 M3,9 L3,15 M7,9 L7,15" stroke="#e02020" stroke-width="1.2"/><circle cx="12.5" cy="8" r="3.2" fill="#ffb020" stroke="#ff8000"/></svg>
<svg style="left:718px;top:1086px" width="15" height="14" viewBox="0 0 15 14"><path d="M1,5 L5,1 L14,1 L14,9 L10,13 L1,13 Z" fill="#ccc" stroke="#444" stroke-width="1.1"/><path d="M1,5 L10,5 L14,1 M10,5 L10,13" fill="none" stroke="#444"/></svg>
<svg style="left:738px;top:1086px" width="16" height="15" viewBox="0 0 16 15"><path d="M1,1 L1,15 M15,1 L15,7 M1,3 L15,3" stroke="#333" stroke-width="1.3"/><path d="M2,12 L8,12" stroke="#333" stroke-dasharray="1.5 1"/><rect x="9" y="9" width="6" height="5" fill="#555"/><path d="M10,9 L10,7 A2,2 0 0 1 14,7 L14,9" fill="none" stroke="#555"/></svg>
<svg style="left:763px;top:1090px" width="7" height="10" viewBox="0 0 7 10"><path d="M5.5,1.5 L1.8,5 L5.5,8.5" fill="none" stroke="#333" stroke-width="1.8"/></svg>
<svg style="left:0;top:0" width="1915" height="1104" viewBox="0 0 1915 1104">
<polygon points="724.5,639.0 913.0,592.0 914.0,659.0 1060.0,827.0 1051.0,841.0 1072.8,865.0 1105.8,906.7 1061.4,916.8 1005.6,852.0 929.5,869.4" fill="#6a95f1" />
<polygon points="724.5,639.0 913.0,592.0 913.0,616.0 723.5,658.0" fill="#5a80d3" />
<polygon points="724.5,639.0 747.0,664.7 763.0,682.8 781.0,695.5 826.0,746.0 851.0,775.0 929.5,869.4 929.5,896.5 851.0,806.0 826.0,771.0 781.0,718.0 763.0,701.0 747.0,684.6 724.0,658.0" fill="#4d6aad" />
<polygon points="929.5,869.4 1005.6,852.0 1005.6,880.0 929.5,896.5" fill="#5a7fd5" />
<polygon points="1005.6,852.0 1061.4,916.8 1061.4,944.7 1005.6,880.0" fill="#4d6aad" />
<polygon points="1061.4,916.8 1105.8,906.7 1105.8,933.3 1061.4,944.7" fill="#5a7fd5" />
<polygon points="1051.0,841.0 1072.8,837.0 1072.8,864.8 1105.8,906.7 1105.8,933.3 1090.0,912.0" fill="#4a66ad" />
<polyline points="724.5,639.0 913.0,592.0" fill="none" stroke="#0435cc" stroke-width="1" />
<polyline points="724.5,639.0 747.0,664.7 763.0,682.8 781.0,695.5 826.0,746.0 851.0,775.0 929.5,869.4 1005.6,852.0 1061.4,916.8 1105.8,906.7" fill="none" stroke="#0435cc" stroke-width="1.2" />
<polyline points="724.0,658.0 747.0,684.6 763.0,701.0 781.0,718.0 826.0,771.0 851.0,806.0 929.5,896.5 1005.6,880.0 1061.4,944.7 1105.8,933.3 1105.8,906.7 1072.8,864.8 1072.8,837.0" fill="none" stroke="#0435cc" stroke-width="1.2" />
<line x1="929.5" y1="869.4" x2="929.5" y2="896.5" stroke="#0435cc" stroke-width="1" />
<line x1="1005.6" y1="852.0" x2="1005.6" y2="880.0" stroke="#0435cc" stroke-width="1" />
<line x1="1061.4" y1="916.8" x2="1061.4" y2="944.7" stroke="#0435cc" stroke-width="1" />
<line x1="747.0" y1="664.7" x2="747.0" y2="684.6" stroke="#2456d8" stroke-width="0.9" />
<line x1="763.0" y1="682.8" x2="763.0" y2="701.0" stroke="#2456d8" stroke-width="0.9" />
<line x1="781.0" y1="695.5" x2="781.0" y2="718.0" stroke="#2456d8" stroke-width="0.9" />
<line x1="826.0" y1="746.0" x2="826.0" y2="771.0" stroke="#2456d8" stroke-width="0.9" />
<line x1="851.0" y1="775.0" x2="851.0" y2="806.0" stroke="#2456d8" stroke-width="0.9" />
<line x1="912.3" y1="660.0" x2="747.0" y2="664.7" stroke="#0435cc" stroke-width="0.9" />
<line x1="912.3" y1="660.0" x2="763.0" y2="682.8" stroke="#0435cc" stroke-width="0.9" />
<line x1="912.3" y1="660.0" x2="781.0" y2="695.5" stroke="#0435cc" stroke-width="0.9" />
<line x1="912.3" y1="660.0" x2="826.0" y2="746.0" stroke="#0435cc" stroke-width="0.9" />
<line x1="912.3" y1="660.0" x2="851.0" y2="775.0" stroke="#0435cc" stroke-width="0.9" />
<line x1="851.0" y1="775.0" x2="981.0" y2="800.0" stroke="#0435cc" stroke-width="0.9" />
<line x1="851.0" y1="775.0" x2="1005.6" y2="852.0" stroke="#0435cc" stroke-width="0.9" />
<line x1="981.0" y1="800.0" x2="1051.0" y2="841.0" stroke="#0435cc" stroke-width="0.9" />
<line x1="1005.6" y1="852.0" x2="1072.8" y2="864.8" stroke="#0435cc" stroke-width="0.9" />
<line x1="1005.6" y1="852.0" x2="1105.8" y2="906.7" stroke="#0435cc" stroke-width="0.8" />
<line x1="871.5" y1="603.0" x2="912.3" y2="660.0" stroke="#0435cc" stroke-width="0.9" />
<line x1="871.5" y1="603.0" x2="871.5" y2="622.0" stroke="#2456d8" stroke-width="0.8" />
<line x1="747.0" y1="664.7" x2="871.5" y2="603.0" stroke="#0435cc" stroke-width="0.9" />
<polygon points="1070.0,490.0 1297.6,438.3 1325.5,464.4 1445.5,437.0 1478.4,476.0 1478.4,524.0 1445.5,530.0 1445.5,655.9 1430.0,638.0 1369.4,651.0 1210.0,686.3 1100.0,700.0" fill="#4a6fcf" />
<polygon points="1082.0,488.0 1297.6,438.3 1301.0,445.0 1086.0,495.0" fill="#5d88e8" />
<polygon points="1297.6,438.3 1370.0,510.0 1370.0,651.0 1297.6,610.0" fill="#4569c6" />
<polygon points="1140.0,566.0 1369.0,516.0 1369.0,609.5 1209.7,647.3 1180.0,640.0" fill="#5079da" />
<polygon points="1209.7,647.3 1369.0,609.5 1369.0,650.0 1209.7,687.0" fill="#4a6bcb" />
<polygon points="1313.0,623.4 1329.0,619.5 1329.0,655.0 1313.0,659.0" fill="#2f4c9c" />
<polygon points="1298.0,440.0 1335.0,476.0 1335.0,629.0 1298.0,600.0" fill="#4265c2" />
<polygon points="1325.5,464.4 1445.5,437.0 1477.7,475.8 1356.0,496.4" fill="#4b6cc2" />
<polygon points="1356.0,496.4 1477.7,475.8 1477.7,522.7 1369.0,540.5 1369.0,509.0" fill="#4a6bc8" />
<polygon points="1445.5,437.0 1477.7,475.8 1477.7,521.5 1445.5,481.0" fill="#34497f" />
<polygon points="1445.5,481.0 1477.7,521.5 1445.5,524.0" fill="#3f5a9e" />
<polygon points="1445.5,530.0 1515.3,613.0 1445.5,628.6" fill="#6a95f1" />
<polygon points="1464.8,523.7 1534.8,608.5 1515.3,613.0 1445.5,530.0" fill="#4d6aad" />
<polygon points="1445.5,628.6 1534.8,608.5 1534.8,635.7 1445.5,655.9" fill="#5a7fd5" />
<polyline points="1464.8,523.7 1534.8,608.5 1534.8,635.7 1445.5,655.9 1430.0,638.0" fill="none" stroke="#0435cc" stroke-width="1.1" />
<line x1="1445.5" y1="628.6" x2="1534.8" y2="608.5" stroke="#0435cc" stroke-width="1" />
<line x1="1445.5" y1="594.0" x2="1534.8" y2="608.5" stroke="#0435cc" stroke-width="0.9" />
<line x1="1445.5" y1="594.0" x2="1480.0" y2="560.0" stroke="#3050b0" stroke-width="0.6" />
<line x1="1462.5" y1="524.0" x2="1462.5" y2="560.0" stroke="#0435cc" stroke-width="3" />
<polyline points="1082.0,488.0 1297.6,438.3 1370.0,510.0 1370.0,651.0" fill="none" stroke="#0435cc" stroke-width="1.3" />
<line x1="1086.0" y1="495.0" x2="1301.0" y2="445.0" stroke="#4d7fe8" stroke-width="1" />
<polyline points="1325.5,464.4 1445.5,437.0 1477.7,475.8 1477.7,522.7" fill="none" stroke="#0435cc" stroke-width="1.1" />
<line x1="1445.5" y1="437.0" x2="1445.5" y2="481.0" stroke="#2456d8" stroke-width="0.9" />
<line x1="1445.5" y1="524.0" x2="1445.5" y2="655.9" stroke="#0435cc" stroke-width="1.6" />
<line x1="1415.3" y1="331.2" x2="1415.3" y2="500.0" stroke="#0435cc" stroke-width="2" />
<polyline points="1210.0,686.3 1369.4,650.8 1444.7,631.8" fill="none" stroke="#0435cc" stroke-width="1.3" />
<line x1="1356.0" y1="496.4" x2="1477.7" y2="475.8" stroke="#0435cc" stroke-width="1.6" />
<line x1="1362.0" y1="502.0" x2="1446.0" y2="484.0" stroke="#0435cc" stroke-width="1.1" />
<line x1="1369.0" y1="540.5" x2="1477.7" y2="522.7" stroke="#0435cc" stroke-width="1.2" />
<line x1="1414.0" y1="494.0" x2="1446.0" y2="478.3" stroke="#0435cc" stroke-width="1.5" />
<line x1="1414.0" y1="487.0" x2="1445.0" y2="521.0" stroke="#0435cc" stroke-width="1.6" />
<line x1="1410.0" y1="489.0" x2="1441.0" y2="523.0" stroke="#4d7fe8" stroke-width="1" />
<line x1="1140.0" y1="559.7" x2="1369.0" y2="510.0" stroke="#0435cc" stroke-width="2" />
<line x1="1140.0" y1="565.0" x2="1369.0" y2="515.0" stroke="#0435cc" stroke-width="1.3" />
<line x1="1369.0" y1="510.0" x2="1412.0" y2="490.0" stroke="#0435cc" stroke-width="2" />
<line x1="1090.0" y1="532.0" x2="1301.0" y2="489.0" stroke="#4d7fe8" stroke-width="1.1" />
<line x1="1302.0" y1="446.0" x2="1302.0" y2="506.0" stroke="#2456d8" stroke-width="1" />
<line x1="1335.0" y1="476.0" x2="1335.0" y2="629.0" stroke="#2456d8" stroke-width="1" />
<line x1="1188.0" y1="560.0" x2="1254.0" y2="637.0" stroke="#2456d8" stroke-width="1.3" />
<line x1="1191.0" y1="559.0" x2="1257.0" y2="636.0" stroke="#4d7fe8" stroke-width="0.9" />
<line x1="1242.0" y1="548.0" x2="1290.0" y2="620.0" stroke="#2456d8" stroke-width="1.3" />
<line x1="1245.0" y1="547.0" x2="1293.0" y2="619.0" stroke="#4d7fe8" stroke-width="0.9" />
<line x1="1265.5" y1="543.7" x2="1329.0" y2="619.4" stroke="#2456d8" stroke-width="1.3" />
<line x1="1268.5" y1="542.7" x2="1332.0" y2="618.4" stroke="#4d7fe8" stroke-width="0.9" />
<line x1="1301.0" y1="537.8" x2="1365.0" y2="611.5" stroke="#2456d8" stroke-width="1.3" />
<line x1="1304.0" y1="536.8" x2="1368.0" y2="610.5" stroke="#4d7fe8" stroke-width="0.9" />
<line x1="1188.0" y1="562.0" x2="1242.0" y2="548.0" stroke="#2456d8" stroke-width="1" />
<line x1="1190.0" y1="617.5" x2="1216.0" y2="610.5" stroke="#2456d8" stroke-width="1" />
<line x1="1216.0" y1="610.5" x2="1216.0" y2="565.0" stroke="#4d7fe8" stroke-width="1" />
<line x1="1226.0" y1="592.0" x2="1300.0" y2="576.0" stroke="#4d7fe8" stroke-width="1" />
<line x1="1184.0" y1="566.0" x2="1216.0" y2="610.0" stroke="#2d4aa0" stroke-width="3" stroke-dasharray="1.5 1.5"/>
<polygon points="1257.0,556.0 1266.0,554.0 1266.0,560.0 1257.0,562.0" fill="#2d4aa0" />
<line x1="1369.0" y1="510.0" x2="1369.0" y2="651.0" stroke="#0435cc" stroke-width="1.5" />
<line x1="1209.7" y1="647.3" x2="1369.0" y2="609.5" stroke="#0435cc" stroke-width="1.2" />
<line x1="1209.7" y1="652.0" x2="1369.0" y2="614.0" stroke="#2456d8" stroke-width="0.8" />
<line x1="1369.0" y1="609.5" x2="1445.0" y2="590.0" stroke="#0435cc" stroke-width="1" />
<line x1="1369.0" y1="630.0" x2="1445.0" y2="612.0" stroke="#2456d8" stroke-width="0.8" />
<line x1="1215.7" y1="645.9" x2="1215.7" y2="679.6" stroke="#0435cc" stroke-width="1.6" />
<line x1="1218.7" y1="645.9" x2="1218.7" y2="679.6" stroke="#4d7fe8" stroke-width="0.9" />
<line x1="1237.6" y1="640.7" x2="1237.6" y2="654.7" stroke="#0435cc" stroke-width="1.6" />
<line x1="1240.6" y1="640.7" x2="1240.6" y2="654.7" stroke="#4d7fe8" stroke-width="0.9" />
<line x1="1253.5" y1="636.9" x2="1253.5" y2="670.7" stroke="#0435cc" stroke-width="1.6" />
<line x1="1256.5" y1="636.9" x2="1256.5" y2="670.7" stroke="#4d7fe8" stroke-width="0.9" />
<line x1="1275.4" y1="631.7" x2="1275.4" y2="645.7" stroke="#0435cc" stroke-width="1.6" />
<line x1="1278.4" y1="631.7" x2="1278.4" y2="645.7" stroke="#4d7fe8" stroke-width="0.9" />
<line x1="1291.4" y1="627.9" x2="1291.4" y2="661.8" stroke="#0435cc" stroke-width="1.6" />
<line x1="1294.4" y1="627.9" x2="1294.4" y2="661.8" stroke="#4d7fe8" stroke-width="0.9" />
<line x1="1329.2" y1="619.0" x2="1329.2" y2="652.9" stroke="#0435cc" stroke-width="1.6" />
<line x1="1332.2" y1="619.0" x2="1332.2" y2="652.9" stroke="#4d7fe8" stroke-width="0.9" />
<line x1="1367.0" y1="610.0" x2="1367.0" y2="644.0" stroke="#0435cc" stroke-width="1.6" />
<line x1="1370.0" y1="610.0" x2="1370.0" y2="644.0" stroke="#4d7fe8" stroke-width="0.9" />
<line x1="1395.0" y1="603.0" x2="1395.0" y2="637.5" stroke="#0435cc" stroke-width="1.6" />
<line x1="1398.0" y1="603.0" x2="1398.0" y2="637.5" stroke="#4d7fe8" stroke-width="0.9" />
<line x1="1425.0" y1="595.5" x2="1425.0" y2="630.0" stroke="#0435cc" stroke-width="1.6" />
<line x1="1428.0" y1="595.5" x2="1428.0" y2="630.0" stroke="#4d7fe8" stroke-width="0.9" />
<line x1="1395.0" y1="470.0" x2="1395.0" y2="600.0" stroke="#2456d8" stroke-width="1" />
<line x1="1420.0" y1="460.0" x2="1420.0" y2="600.0" stroke="#4d7fe8" stroke-width="0.8" />
<line x1="1370.0" y1="560.0" x2="1445.0" y2="542.0" stroke="#4d7fe8" stroke-width="1" />
<line x1="1380.0" y1="600.0" x2="1445.0" y2="585.0" stroke="#2456d8" stroke-width="1" />
<polygon points="906.0,520.0 1054.0,692.0 1060.0,827.0 914.0,659.0 914.0,553.0 906.0,548.0" fill="#4468c8" />
<polygon points="1054.0,692.0 1207.2,643.2 1213.0,650.0 1213.0,781.0 1218.0,780.0 1218.0,791.0 1060.0,827.0" fill="#5078d8" />
<polygon points="1130.0,670.0 1207.0,645.0 1213.0,650.0 1213.0,781.0 1218.0,791.0 1150.0,806.0" fill="#4a6cc8" />
<polygon points="1160.0,700.0 1205.0,680.0 1211.0,785.0 1180.0,795.0" fill="#3f60b8" />
<polygon points="914.0,572.0 922.6,580.6 922.9,660.1 914.0,650.0" fill="#3f62c4" />
<polygon points="929.6,587.6 938.1,596.1 939.1,678.6 930.2,668.4" fill="#3f62c4" />
<polygon points="945.1,603.1 953.7,611.7 955.4,697.0 946.4,686.9" fill="#3f62c4" />
<polygon points="960.7,618.7 969.2,627.2 971.6,715.5 962.7,705.3" fill="#3f62c4" />
<polygon points="976.2,634.2 984.8,642.8 987.8,733.9 978.9,723.8" fill="#3f62c4" />
<polygon points="991.8,649.8 1000.3,658.3 1004.0,752.4 995.1,742.2" fill="#3f62c4" />
<polygon points="1007.3,665.3 1015.9,673.9 1020.3,770.8 1011.3,760.7" fill="#3f62c4" />
<polygon points="1022.9,680.9 1031.4,689.4 1036.5,789.3 1027.6,779.1" fill="#3f62c4" />
<polygon points="1038.4,696.4 1047.0,705.0 1052.7,807.7 1043.8,797.6" fill="#3f62c4" />
<polygon points="914.0,553.0 1054.0,692.0 1054.0,704.0 914.0,565.0" fill="#253d86" />
<polygon points="915.4,554.4 920.3,559.3 920.3,571.3 915.4,566.4" fill="#5070c8" />
<polygon points="931.0,569.8 935.9,574.7 935.9,586.7 931.0,581.8" fill="#5070c8" />
<polygon points="946.5,585.3 951.4,590.1 951.4,602.1 946.5,597.3" fill="#5070c8" />
<polygon points="962.1,600.7 967.0,605.6 967.0,617.6 962.1,612.7" fill="#5070c8" />
<polygon points="977.6,616.2 982.5,621.0 982.5,633.0 977.6,628.2" fill="#5070c8" />
<polygon points="993.2,631.6 998.1,636.5 998.1,648.5 993.2,643.6" fill="#5070c8" />
<polygon points="1008.7,647.1 1013.6,651.9 1013.6,663.9 1008.7,659.1" fill="#5070c8" />
<polygon points="1024.3,662.5 1029.2,667.4 1029.2,679.4 1024.3,674.5" fill="#5070c8" />
<polygon points="1039.8,677.9 1044.7,682.8 1044.7,694.8 1039.8,689.9" fill="#5070c8" />
<polygon points="914.0,659.0 1060.0,826.0 1060.0,846.0 916.0,682.0" fill="#5878c6" />
<line x1="914.0" y1="659.0" x2="1060.0" y2="826.0" stroke="#0435cc" stroke-width="1" />
<line x1="916.0" y1="682.0" x2="1060.0" y2="846.0" stroke="#2456d8" stroke-width="1" />
<line x1="914.0" y1="659.0" x2="916.0" y2="682.0" stroke="#0435cc" stroke-width="1" />
<line x1="920.0" y1="640.0" x2="1058.0" y2="800.0" stroke="#2a4490" stroke-width="1.2" />
<polygon points="906.3,520.0 1061.4,468.7 1207.2,643.2 1054.0,692.0" fill="#5684e6" />
<polygon points="917.1,532.6 932.6,527.4 949.2,546.9 933.8,552.0" fill="#6290ec" />
<polygon points="979.1,512.1 994.6,507.0 1011.1,526.6 995.7,531.7" fill="#6290ec" />
<polygon points="1041.1,491.7 1056.5,486.6 1073.0,506.2 1057.6,511.3" fill="#6290ec" />
<polygon points="980.2,536.7 995.7,531.7 1012.3,551.2 996.8,556.3" fill="#6290ec" />
<polygon points="1042.1,516.4 1057.6,511.3 1074.1,531.0 1058.6,536.0" fill="#6290ec" />
<polygon points="981.4,561.3 996.8,556.3 1013.4,575.8 998.0,580.8" fill="#6290ec" />
<polygon points="1043.2,541.1 1058.6,536.0 1075.2,555.7 1059.7,560.7" fill="#6290ec" />
<polygon points="982.6,585.8 998.0,580.8 1014.7,600.3 999.3,605.3" fill="#6290ec" />
<polygon points="1044.3,565.7 1059.7,560.7 1076.3,580.3 1060.9,585.3" fill="#6290ec" />
<polygon points="1106.0,545.6 1121.5,540.6 1137.9,560.3 1122.5,565.3" fill="#6290ec" />
<polygon points="983.8,610.3 999.3,605.3 1015.9,624.8 1000.5,629.7" fill="#6290ec" />
<polygon points="1045.5,590.3 1060.9,585.3 1077.5,604.9 1062.1,609.9" fill="#6290ec" />
<polygon points="1107.1,570.3 1122.5,565.3 1139.0,585.0 1123.6,590.0" fill="#6290ec" />
<polygon points="1046.7,614.8 1062.1,609.9 1078.7,629.4 1063.3,634.3" fill="#6290ec" />
<polygon points="1108.3,594.9 1123.6,590.0 1140.2,609.6 1124.8,614.6" fill="#6290ec" />
<polygon points="1048.0,639.3 1063.3,634.3 1080.0,653.9 1064.6,658.8" fill="#6290ec" />
<polygon points="1109.4,619.5 1124.8,614.6 1141.3,634.2 1126.0,639.1" fill="#6290ec" />
<polygon points="1049.3,663.7 1064.6,658.8 1081.3,678.3 1065.9,683.2" fill="#6290ec" />
<polygon points="1110.6,644.0 1126.0,639.1 1142.5,658.7 1127.2,663.6" fill="#6290ec" />
<polygon points="1172.0,624.4 1187.4,619.5 1203.8,639.2 1188.5,644.1" fill="#6290ec" />
<polygon points="1050.6,688.0 1065.9,683.2 1069.3,687.1 1054.0,692.0" fill="#6290ec" />
<polygon points="1111.9,668.5 1127.2,663.6 1130.6,667.6 1115.3,672.5" fill="#6290ec" />
<polygon points="1173.2,649.0 1188.5,644.1 1191.9,648.1 1176.6,653.0" fill="#6290ec" />
<polygon points="906.3,520.0 914.0,524.0 914.0,553.0 906.5,548.0" fill="#26408e" />
<polygon points="906.3,520.0 1054.0,692.0 1056.0,699.0 908.0,527.0" fill="#2c48a0" />
<line x1="917.1" y1="532.6" x2="1072.0" y2="481.4" stroke="#0535c8" stroke-width="1.7" stroke-dasharray="1.7 1.5"/>
<line x1="933.8" y1="552.0" x2="1088.5" y2="501.2" stroke="#0535c8" stroke-width="1.7" stroke-dasharray="1.7 1.5"/>
<line x1="950.5" y1="571.4" x2="1105.0" y2="520.9" stroke="#0535c8" stroke-width="1.7" stroke-dasharray="1.7 1.5"/>
<line x1="967.2" y1="590.9" x2="1121.5" y2="540.6" stroke="#0535c8" stroke-width="1.7" stroke-dasharray="1.7 1.5"/>
<line x1="983.8" y1="610.3" x2="1137.9" y2="560.3" stroke="#0535c8" stroke-width="1.7" stroke-dasharray="1.7 1.5"/>
<line x1="1000.5" y1="629.7" x2="1154.4" y2="580.0" stroke="#0535c8" stroke-width="1.7" stroke-dasharray="1.7 1.5"/>
<line x1="1017.2" y1="649.2" x2="1170.9" y2="599.7" stroke="#0535c8" stroke-width="1.7" stroke-dasharray="1.7 1.5"/>
<line x1="1033.9" y1="668.6" x2="1187.4" y2="619.5" stroke="#0535c8" stroke-width="1.7" stroke-dasharray="1.7 1.5"/>
<line x1="921.8" y1="514.9" x2="1069.3" y2="687.1" stroke="#6a97ee" stroke-width="1.3" />
<line x1="937.3" y1="509.7" x2="1084.6" y2="682.2" stroke="#6a97ee" stroke-width="1.3" />
<line x1="952.8" y1="504.6" x2="1100.0" y2="677.4" stroke="#6a97ee" stroke-width="1.3" />
<line x1="968.3" y1="499.5" x2="1115.3" y2="672.5" stroke="#6a97ee" stroke-width="1.3" />
<line x1="983.9" y1="494.4" x2="1130.6" y2="667.6" stroke="#6a97ee" stroke-width="1.3" />
<line x1="999.4" y1="489.2" x2="1145.9" y2="662.7" stroke="#6a97ee" stroke-width="1.3" />
<line x1="1014.9" y1="484.1" x2="1161.2" y2="657.8" stroke="#6a97ee" stroke-width="1.3" />
<line x1="1030.4" y1="479.0" x2="1176.6" y2="653.0" stroke="#6a97ee" stroke-width="1.3" />
<line x1="1045.9" y1="473.8" x2="1191.9" y2="648.1" stroke="#6a97ee" stroke-width="1.3" />
<line x1="925.4" y1="542.2" x2="1080.2" y2="491.2" stroke="#6795f0" stroke-width="0.9" />
<line x1="942.0" y1="561.6" x2="1096.7" y2="510.9" stroke="#6795f0" stroke-width="0.9" />
<line x1="958.7" y1="581.1" x2="1113.2" y2="530.6" stroke="#6795f0" stroke-width="0.9" />
<line x1="975.4" y1="600.5" x2="1129.6" y2="550.4" stroke="#6795f0" stroke-width="0.9" />
<line x1="992.1" y1="619.9" x2="1146.1" y2="570.1" stroke="#6795f0" stroke-width="0.9" />
<line x1="1008.8" y1="639.4" x2="1162.6" y2="589.8" stroke="#6795f0" stroke-width="0.9" />
<line x1="1025.5" y1="658.8" x2="1179.1" y2="609.5" stroke="#6795f0" stroke-width="0.9" />
<line x1="1042.2" y1="678.2" x2="1195.5" y2="629.2" stroke="#6795f0" stroke-width="0.9" />
<polyline points="1054.0,692.0 906.3,520.0 1061.4,468.7 1207.2,643.2" fill="none" stroke="#0435cc" stroke-width="2" />
<line x1="1061.4" y1="468.7" x2="1207.2" y2="643.2" stroke="#0435cc" stroke-width="2.5" />
<line x1="1054.0" y1="692.0" x2="1207.2" y2="643.2" stroke="#0435cc" stroke-width="3.5" />
<line x1="1054.0" y1="695.0" x2="1207.2" y2="646.2" stroke="#2456d8" stroke-width="1.2" stroke-dasharray="1 1"/>
<line x1="914.0" y1="556.0" x2="914.0" y2="659.0" stroke="#0435cc" stroke-width="1.6" />
<line x1="918.0" y1="561.0" x2="918.0" y2="664.0" stroke="#0435cc" stroke-width="1" />
<line x1="929.6" y1="571.7" x2="930.2" y2="677.7" stroke="#0435cc" stroke-width="1.6" />
<line x1="933.6" y1="576.7" x2="934.2" y2="682.7" stroke="#0435cc" stroke-width="1" />
<line x1="945.1" y1="587.3" x2="946.4" y2="696.3" stroke="#0435cc" stroke-width="1.6" />
<line x1="949.1" y1="592.3" x2="950.4" y2="701.3" stroke="#0435cc" stroke-width="1" />
<line x1="960.7" y1="603.0" x2="962.7" y2="715.0" stroke="#0435cc" stroke-width="1.6" />
<line x1="964.7" y1="608.0" x2="966.7" y2="720.0" stroke="#0435cc" stroke-width="1" />
<line x1="976.2" y1="618.7" x2="978.9" y2="733.7" stroke="#0435cc" stroke-width="1.6" />
<line x1="980.2" y1="623.7" x2="982.9" y2="738.7" stroke="#0435cc" stroke-width="1" />
<line x1="991.8" y1="634.3" x2="995.1" y2="752.3" stroke="#0435cc" stroke-width="1.6" />
<line x1="995.8" y1="639.3" x2="999.1" y2="757.3" stroke="#0435cc" stroke-width="1" />
<line x1="1007.3" y1="650.0" x2="1011.3" y2="771.0" stroke="#0435cc" stroke-width="1.6" />
<line x1="1011.3" y1="655.0" x2="1015.3" y2="776.0" stroke="#0435cc" stroke-width="1" />
<line x1="1022.9" y1="665.7" x2="1027.6" y2="789.7" stroke="#0435cc" stroke-width="1.6" />
<line x1="1026.9" y1="670.7" x2="1031.6" y2="794.7" stroke="#0435cc" stroke-width="1" />
<line x1="1038.4" y1="681.3" x2="1043.8" y2="808.3" stroke="#0435cc" stroke-width="1.6" />
<line x1="1042.4" y1="686.3" x2="1047.8" y2="813.3" stroke="#0435cc" stroke-width="1" />
<line x1="1054.0" y1="697.0" x2="1060.0" y2="827.0" stroke="#0435cc" stroke-width="1.6" />
<line x1="1058.0" y1="702.0" x2="1064.0" y2="832.0" stroke="#0435cc" stroke-width="1" />
<line x1="914.0" y1="560.0" x2="930.1" y2="673.4" stroke="#0435cc" stroke-width="1.1" />
<line x1="929.4" y1="575.6" x2="914.0" y2="655.0" stroke="#0435cc" stroke-width="1.1" />
<line x1="992.4" y1="639.5" x2="1011.8" y2="766.9" stroke="#0435cc" stroke-width="1.1" />
<line x1="1007.8" y1="655.1" x2="995.8" y2="748.5" stroke="#0435cc" stroke-width="1.1" />
<line x1="914.0" y1="630.0" x2="1060.0" y2="795.0" stroke="#2456d8" stroke-width="1" />
<line x1="914.0" y1="600.0" x2="1054.0" y2="760.0" stroke="#4d7fe8" stroke-width="0.8" />
<line x1="1055.0" y1="694.0" x2="1055.0" y2="827.0" stroke="#0435cc" stroke-width="1.6" />
<line x1="1059.0" y1="696.0" x2="1059.0" y2="827.0" stroke="#0435cc" stroke-width="1.6" />
<line x1="1106.0" y1="683.0" x2="1106.0" y2="814.0" stroke="#0435cc" stroke-width="1.6" />
<line x1="1109.0" y1="683.0" x2="1109.0" y2="814.0" stroke="#0435cc" stroke-width="1.6" />
<line x1="1156.0" y1="670.0" x2="1156.0" y2="802.0" stroke="#0435cc" stroke-width="1.6" />
<line x1="1159.0" y1="670.0" x2="1159.0" y2="802.0" stroke="#0435cc" stroke-width="1.6" />
<line x1="1206.0" y1="646.0" x2="1209.0" y2="790.0" stroke="#0435cc" stroke-width="1.6" />
<line x1="1211.0" y1="648.0" x2="1214.0" y2="790.0" stroke="#0435cc" stroke-width="1.6" />
<line x1="1060.0" y1="715.0" x2="1201.0" y2="683.0" stroke="#0435cc" stroke-width="1.8" />
<line x1="1060.0" y1="721.0" x2="1201.0" y2="689.0" stroke="#2456d8" stroke-width="1" />
<line x1="1060.0" y1="767.0" x2="1201.0" y2="735.0" stroke="#0435cc" stroke-width="1.8" />
<polygon points="1081.0,810.0 1218.0,780.0 1218.0,791.0 1081.7,820.2" fill="#5b85e0" />
<polyline points="1060.0,827.0 1218.0,791.0 1218.0,780.0 1213.0,781.0 1213.0,650.0 1207.0,643.0" fill="none" stroke="#0435cc" stroke-width="1.5" />
<line x1="1081.0" y1="810.0" x2="1218.0" y2="780.0" stroke="#0435cc" stroke-width="1" />
<polyline points="914.0,553.0 914.0,659.0 1060.0,827.0" fill="none" stroke="#0435cc" stroke-width="1.6" />
<line x1="723.5" y1="492.5" x2="1415.3" y2="331.2" stroke="#0435cc" stroke-width="2" />
<line x1="1415.3" y1="331.2" x2="1673.1" y2="635.2" stroke="#0435cc" stroke-width="2" />
<line x1="1673.1" y1="635.2" x2="981.0" y2="799.0" stroke="#0435cc" stroke-width="2" />
<line x1="981.0" y1="799.0" x2="723.5" y2="492.5" stroke="#0435cc" stroke-width="2" />
<line x1="723.5" y1="658.0" x2="1415.3" y2="496.5" stroke="#0435cc" stroke-width="2" />
<line x1="1415.3" y1="496.5" x2="1673.1" y2="802.5" stroke="#0435cc" stroke-width="2" />
<line x1="1673.1" y1="802.5" x2="981.0" y2="964.0" stroke="#0435cc" stroke-width="2" />
<line x1="981.0" y1="964.0" x2="723.5" y2="658.0" stroke="#0435cc" stroke-width="2" />
<line x1="723.5" y1="492.5" x2="723.5" y2="658.0" stroke="#0435cc" stroke-width="2" />
<line x1="1673.1" y1="635.2" x2="1673.1" y2="802.5" stroke="#0435cc" stroke-width="2" />
<line x1="981.0" y1="799.0" x2="981.0" y2="964.0" stroke="#0435cc" stroke-width="2" />
<polygon points="996.0,806.0 1014.3,825.0 1014.3,852.0 996.0,829.0" fill="#3c2020" stroke="#111" stroke-width="0.8" />
<polygon points="1014.3,825.0 1074.0,814.0 1074.0,838.4 1014.3,852.0" fill="#6e3b3b" stroke="#111" stroke-width="0.8" />
<polygon points="992.6,801.3 1004.4,799.5 1068.7,786.0 1080.5,811.3 1014.3,824.9" fill="#ffffff" stroke="#222" stroke-width="1" />
<polygon points="992.6,801.3 1004.4,799.5 1014.3,824.9 1000.0,806.0" fill="#5a5a5a" />
<line x1="1014.3" y1="824.9" x2="1080.5" y2="811.3" stroke="#111" stroke-width="1.6" />
<rect x="1031" y="836" width="6" height="6" fill="#7fb0ff" stroke="#111" stroke-width="1.2"/>
<rect x="1055" y="831" width="6" height="6" fill="#7fb0ff" stroke="#111" stroke-width="1.2"/>
<rect x="1001" y="824" width="4" height="6" fill="#7fb0ff" stroke="#111" stroke-width="1.2"/>
<rect x="1009" y="834" width="4" height="6" fill="#7fb0ff" stroke="#111" stroke-width="1.2"/>
<line x1="1076.0" y1="785.0" x2="1082.0" y2="800.0" stroke="#cccccc" stroke-width="2" />
<line x1="1076.0" y1="812.0" x2="1082.0" y2="826.0" stroke="#cccccc" stroke-width="2" />
<g transform="translate(977,577)" fill="#000"><rect x="-6" y="-0.6" width="12" height="1.2"/><rect x="-0.6" y="-6" width="1.2" height="12"/><polygon points="-8,0 -5,-3 -5,3"/><polygon points="8,0 5,-3 5,3"/><polygon points="0,-8 -3,-5 3,-5"/><polygon points="0,8 -3,5 3,5"/><rect x="-1.5" y="-1.5" width="3" height="3" fill="#fff"/></g>
<line x1="1207" y1="643" x2="1246" y2="600" stroke="#8a6a4a" stroke-width="1"/>
<circle cx="1251" cy="594" r="4" fill="#f0f4ff" stroke="#6a90e0" stroke-width="1.2"/>
</svg>
</body></html>
